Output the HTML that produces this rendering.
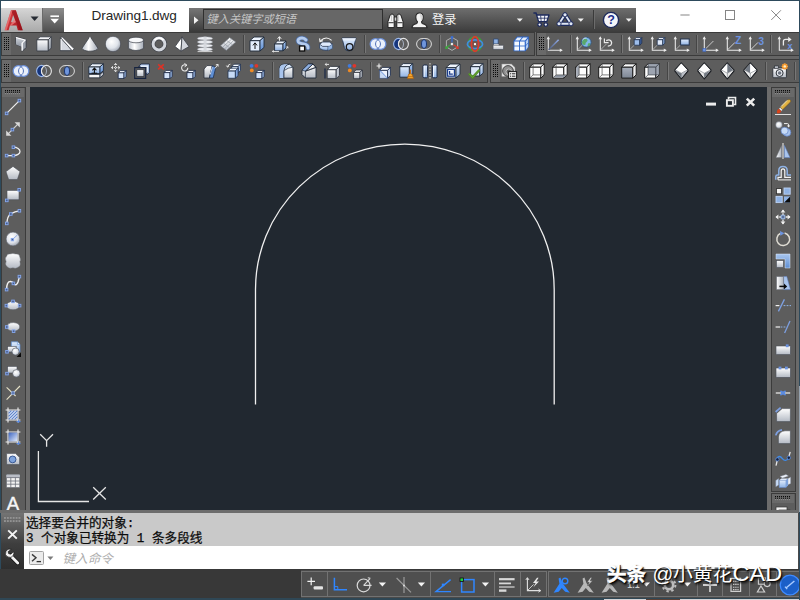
<!DOCTYPE html><html><head><meta charset="utf-8"><title>Drawing1.dwg</title><style>
html,body{margin:0;padding:0}
body{width:800px;height:600px;overflow:hidden;background:#6c6c6c;position:relative;font-family:"Liberation Sans",sans-serif}
.a{position:absolute}
.tb{position:absolute;background:#5d5d5d;border:1px solid #3b3b3b;box-sizing:border-box}
.grip{position:absolute;background:#696969}
svg{position:absolute;overflow:visible}
.sep{position:absolute;width:1px;background:#454545;box-shadow:1px 0 0 #777}
.sb{position:absolute;top:571px;height:26px;box-sizing:border-box;border:1px solid #727272;background:#4f4f4f}
</style></head><body>
<svg width="0" height="0" style="position:absolute"><defs>
<linearGradient id="gSh" x1="0" y1="0" x2="0" y2="1"><stop offset="0" stop-color="#a9b0bc"/><stop offset="1" stop-color="#7d8694"/></linearGradient>
<linearGradient id="gW" x1="0" y1="0" x2="0" y2="1"><stop offset="0" stop-color="#ffffff"/><stop offset="1" stop-color="#b4bac4"/></linearGradient>
<linearGradient id="gWh" x1="0" y1="0" x2="1" y2="0"><stop offset="0" stop-color="#ffffff"/><stop offset="1" stop-color="#aab1bc"/></linearGradient>
<linearGradient id="gD" x1="0" y1="0" x2="0" y2="1"><stop offset="0" stop-color="#c9ced6"/><stop offset="1" stop-color="#8d949f"/></linearGradient>
<linearGradient id="gB" x1="0" y1="0" x2="0" y2="1"><stop offset="0" stop-color="#e3eefc"/><stop offset="1" stop-color="#8fb2e4"/></linearGradient>
<linearGradient id="gB2" x1="0" y1="0" x2="0" y2="1"><stop offset="0" stop-color="#a9c6ee"/><stop offset="1" stop-color="#5f8fd4"/></linearGradient>
<linearGradient id="gR" x1="0" y1="0" x2="1" y2="1"><stop offset="0" stop-color="#e8474a"/><stop offset="1" stop-color="#a3141c"/></linearGradient>
<radialGradient id="gS" cx="0.4" cy="0.35" r="0.7"><stop offset="0" stop-color="#ffffff"/><stop offset="0.6" stop-color="#dfe3ea"/><stop offset="1" stop-color="#9aa1ad"/></radialGradient>
<linearGradient id="gC" x1="0" y1="0" x2="1" y2="0"><stop offset="0" stop-color="#b9bfc9"/><stop offset="0.4" stop-color="#ffffff"/><stop offset="1" stop-color="#a4abb6"/></linearGradient>
<linearGradient id="gG" x1="0" y1="0" x2="1" y2="1"><stop offset="0" stop-color="#f8d66b"/><stop offset="1" stop-color="#c98f1b"/></linearGradient>
</defs></svg>
<div class="a" style="left:0;top:0;width:800px;height:32px;background:#fff"></div>
<div class="a" style="left:0;top:0;width:800px;height:1px;background:#2d4a5c"></div>
<div class="a" style="left:1px;top:8px;width:41px;height:24px;background:linear-gradient(#d6d6d6,#a9a9a9)"></div>
<div class="a" style="left:42px;top:8px;width:22px;height:24px;background:linear-gradient(#8d8d8d,#4e4e4e);border-left:1px solid #6a6a6a;box-sizing:border-box"></div>
<div class="a" style="left:91.6px;top:7.2px;font-size:13.6px;line-height:18px;color:#262626;letter-spacing:-0.08px;white-space:nowrap">Drawing1.dwg</div>
<div class="a" style="left:189px;top:8px;width:447px;height:24px;background:linear-gradient(#6e6e6e,#3c3c3c)"></div>
<div class="a" style="left:189px;top:8px;width:14px;height:24px;background:linear-gradient(#777,#3a3a3a)"></div>
<div class="a" style="left:203px;top:9px;width:180px;height:21px;background:#676767;border:1px solid #2f2f2f;box-sizing:border-box"></div>
<svg class="a" style="left:206px;top:12.4px" width="93" height="15" viewBox="0 -11.2 93 15"><text x="0.5" y="0" font-family="'Liberation Sans','Noto Sans CJK SC',sans-serif" font-size="11.2" font-style="italic" fill="#c4c4c4">键入关键字或短语</text></svg>
<svg class="a" style="left:431.5px;top:12.1px" width="28" height="17" viewBox="0 -12.2 28 17"><text x="0" y="0" font-family="'Liberation Sans','Noto Sans CJK SC',sans-serif" font-size="12.2" fill="#f4f4f4">登录</text></svg>
<div class="a" style="left:593px;top:10px;width:1px;height:19px;background:#3a3a3a;box-shadow:1px 0 0 #6c6c6c"></div>
<svg style="left:3px;top:9px" width="24" height="22" viewBox="0 0 24 22"><g transform="translate(0.6 0) scale(0.86 1)"><path d="M1.2 21.2L8.6 1.2H14.2L22.2 21.2H16.6L15 16.6H7.4L5.8 21.2Z" fill="url(#gR)"/><path d="M11.3 5.6L8.6 13.2H14Z" fill="#b4b4b4"/><path d="M8.6 1.2H14.2L22.2 21.2H18.8Z" fill="#8f0f17" opacity=".6"/><path d="M7.4 16.6L12.8 9.4L14 13.2L9 16.6Z" fill="#ee7a7c" opacity=".8"/><path d="M1.2 21.2L8.6 1.2H10.4L3.6 21.2Z" fill="#f48a8a" opacity=".6"/></g></svg>
<svg style="left:30px;top:15.6px" width="10" height="6" viewBox="0 0 10 6"><path d="M0.6 0.5H8.6L4.6 5Z" fill="#262b33"/></svg>
<svg style="left:47px;top:14px" width="14" height="12" viewBox="0 0 14 12"><rect x="3.4" y="1.4" width="8.6" height="1.7" fill="#fff"/><path d="M3.4 4.8H12L7.7 9.4Z" fill="#fff"/></svg>
<svg style="left:192px;top:14px" width="8" height="12" viewBox="0 0 8 12"><path d="M2 2.6L6.5 6.3L2 10Z" fill="#f2f2f2"/></svg>
<svg style="left:387px;top:13px" width="17" height="16" viewBox="0 0 17 16"><path d="M1 14.6V8.6L2.8 3Q3.2 1 5 1Q6.8 1 7.2 3V14.6Z" fill="#f6f6f6" stroke="#222" stroke-width="1"/><path d="M9.8 14.6V3Q10.2 1 12 1Q13.8 1 14.2 3L16 8.6V14.6Z" fill="#f6f6f6" stroke="#222" stroke-width="1"/><rect x="7.2" y="4" width="2.6" height="4.2" fill="#cfcfcf" stroke="#222" stroke-width=".8"/><path d="M1.4 9.6H6.8M10.2 9.6H15.6" stroke="#555" stroke-width="1.2"/><path d="M4.6 2V8M11.6 2V8" stroke="#c4c4c4" stroke-width="1"/></svg>
<svg style="left:411px;top:12px" width="17" height="17" viewBox="0 0 17 17"><path d="M1 15.8Q1 12.6 5.4 11.6Q6.6 11.2 6.4 9.6Q4.8 8 4.8 5.2Q4.8 1 8.5 1Q12.2 1 12.2 5.2Q12.2 8 10.6 9.6Q10.4 11.2 11.6 11.6Q16 12.6 16 15.8Z" fill="#f4f4f4" stroke="#262626" stroke-width="1.1"/><path d="M8.5 1.6Q11.6 1.6 11.6 5.2Q11.6 7.8 10.2 9.2Q9.6 6 8.5 1.6Z" fill="#d9d9d9"/></svg>
<svg style="left:516px;top:18px" width="8" height="5" viewBox="0 0 8 5"><path d="M0.8 0.5H6.8L3.8 3.8Z" fill="#f0f0f0"/></svg>
<svg style="left:533px;top:12px" width="17" height="15" viewBox="0 0 17 15"><path d="M0.4 1H3L3.8 3.2" fill="none" stroke="#1d2a5c" stroke-width="1.5"/><path d="M3.6 3H16L13.8 9.6H5.6Z" fill="#f4f6fa" stroke="#1d2a5c" stroke-width="1.3" stroke-linejoin="round"/><path d="M4.6 6.2H14.8M7.6 3.4L8.2 9.4M11.8 3.4L11.2 9.4" stroke="#1d2a5c" stroke-width=".8"/><circle cx="6.6" cy="12.6" r="1.8" fill="#f4f6fa" stroke="#1d2a5c" stroke-width="1.3"/><circle cx="12.8" cy="12.6" r="1.8" fill="#f4f6fa" stroke="#1d2a5c" stroke-width="1.3"/></svg>
<svg style="left:556px;top:12px" width="18" height="15" viewBox="0 0 18 15"><path d="M9 2.6L3 11.8H15Z" fill="none" stroke="#1d2a5c" stroke-width="4.2" stroke-linejoin="round"/><path d="M9 2.6L3 11.8H15Z" fill="none" stroke="#dfe6f3" stroke-width="1.9" stroke-linejoin="round"/><circle cx="9" cy="2.8" r="2.1" fill="#dfe6f3" stroke="#1d2a5c" stroke-width="1"/><circle cx="3" cy="11.8" r="2.1" fill="#dfe6f3" stroke="#1d2a5c" stroke-width="1"/><circle cx="15" cy="11.8" r="2.1" fill="#dfe6f3" stroke="#1d2a5c" stroke-width="1"/></svg>
<svg style="left:577px;top:18px" width="8" height="5" viewBox="0 0 8 5"><path d="M0.8 0.5H6.8L3.8 3.8Z" fill="#f0f0f0"/></svg>
<svg style="left:602px;top:11px" width="18" height="18" viewBox="0 0 18 18"><circle cx="9" cy="9" r="7.6" fill="#f4f5f9" stroke="#1d2a5c" stroke-width="1.4"/><text x="9" y="13.4" text-anchor="middle" font-family="Liberation Sans, sans-serif" font-weight="bold" font-size="12.5" fill="#1c2f8c">?</text></svg>
<svg style="left:625px;top:18px" width="8" height="5" viewBox="0 0 8 5"><path d="M0.8 0.5H6.8L3.8 3.8Z" fill="#f0f0f0"/></svg>
<svg style="left:680px;top:9px" width="10" height="10" viewBox="0 0 10 10"><path d="M0.4 6H9.6" stroke="#858585" stroke-width="1"/></svg>
<svg style="left:725px;top:10px" width="10" height="10" viewBox="0 0 10 10"><rect x="0.5" y="0.5" width="9" height="9" fill="none" stroke="#858585" stroke-width="1"/></svg>
<svg style="left:771px;top:10px" width="10" height="10" viewBox="0 0 10 10"><path d="M0.3 0.3L9.9 9.9M9.9 0.3L0.3 9.9" stroke="#858585" stroke-width="1"/></svg>
<div class="a" style="left:0;top:32px;width:800px;height:55px;background:#656565"></div>
<div class="a" style="left:0;top:1px;width:1px;height:599px;background:#2d4a5c"></div>
<div class="tb" style="left:1px;top:32px;width:534px;height:24px"></div>
<div class="tb" style="left:536px;top:32px;width:270px;height:24px"></div>
<div class="tb" style="left:1px;top:59px;width:487px;height:24px"></div>
<div class="tb" style="left:490px;top:59px;width:320px;height:24px"></div>
<div class="grip" style="left:2px;top:33px;width:9px;height:22px"></div><svg style="left:4px;top:37px" width="6" height="16"><rect x="0" y="0" width="1" height="1.0" fill="#0a0a0a"/><rect x="2" y="0" width="1" height="1.0" fill="#0a0a0a"/><rect x="4" y="0" width="1" height="1.0" fill="#0a0a0a"/><rect x="0" y="2" width="1" height="1.0" fill="#0a0a0a"/><rect x="2" y="2" width="1" height="1.0" fill="#0a0a0a"/><rect x="4" y="2" width="1" height="1.0" fill="#0a0a0a"/><rect x="0" y="4" width="1" height="1.0" fill="#0a0a0a"/><rect x="2" y="4" width="1" height="1.0" fill="#0a0a0a"/><rect x="4" y="4" width="1" height="1.0" fill="#0a0a0a"/><rect x="0" y="6" width="1" height="1.0" fill="#0a0a0a"/><rect x="2" y="6" width="1" height="1.0" fill="#0a0a0a"/><rect x="4" y="6" width="1" height="1.0" fill="#0a0a0a"/><rect x="0" y="8" width="1" height="1.0" fill="#0a0a0a"/><rect x="2" y="8" width="1" height="1.0" fill="#0a0a0a"/><rect x="4" y="8" width="1" height="1.0" fill="#0a0a0a"/><rect x="0" y="10" width="1" height="1.0" fill="#0a0a0a"/><rect x="2" y="10" width="1" height="1.0" fill="#0a0a0a"/><rect x="4" y="10" width="1" height="1.0" fill="#0a0a0a"/><rect x="0" y="12" width="1" height="1.0" fill="#0a0a0a"/><rect x="2" y="12" width="1" height="1.0" fill="#0a0a0a"/><rect x="4" y="12" width="1" height="1.0" fill="#0a0a0a"/></svg>
<div class="grip" style="left:537px;top:33px;width:9px;height:22px"></div><svg style="left:539px;top:37px" width="6" height="16"><rect x="0" y="0" width="1" height="1.0" fill="#0a0a0a"/><rect x="2" y="0" width="1" height="1.0" fill="#0a0a0a"/><rect x="4" y="0" width="1" height="1.0" fill="#0a0a0a"/><rect x="0" y="2" width="1" height="1.0" fill="#0a0a0a"/><rect x="2" y="2" width="1" height="1.0" fill="#0a0a0a"/><rect x="4" y="2" width="1" height="1.0" fill="#0a0a0a"/><rect x="0" y="4" width="1" height="1.0" fill="#0a0a0a"/><rect x="2" y="4" width="1" height="1.0" fill="#0a0a0a"/><rect x="4" y="4" width="1" height="1.0" fill="#0a0a0a"/><rect x="0" y="6" width="1" height="1.0" fill="#0a0a0a"/><rect x="2" y="6" width="1" height="1.0" fill="#0a0a0a"/><rect x="4" y="6" width="1" height="1.0" fill="#0a0a0a"/><rect x="0" y="8" width="1" height="1.0" fill="#0a0a0a"/><rect x="2" y="8" width="1" height="1.0" fill="#0a0a0a"/><rect x="4" y="8" width="1" height="1.0" fill="#0a0a0a"/><rect x="0" y="10" width="1" height="1.0" fill="#0a0a0a"/><rect x="2" y="10" width="1" height="1.0" fill="#0a0a0a"/><rect x="4" y="10" width="1" height="1.0" fill="#0a0a0a"/><rect x="0" y="12" width="1" height="1.0" fill="#0a0a0a"/><rect x="2" y="12" width="1" height="1.0" fill="#0a0a0a"/><rect x="4" y="12" width="1" height="1.0" fill="#0a0a0a"/></svg>
<div class="grip" style="left:2px;top:60px;width:9px;height:22px"></div><svg style="left:4px;top:64px" width="6" height="16"><rect x="0" y="0" width="1" height="1.0" fill="#0a0a0a"/><rect x="2" y="0" width="1" height="1.0" fill="#0a0a0a"/><rect x="4" y="0" width="1" height="1.0" fill="#0a0a0a"/><rect x="0" y="2" width="1" height="1.0" fill="#0a0a0a"/><rect x="2" y="2" width="1" height="1.0" fill="#0a0a0a"/><rect x="4" y="2" width="1" height="1.0" fill="#0a0a0a"/><rect x="0" y="4" width="1" height="1.0" fill="#0a0a0a"/><rect x="2" y="4" width="1" height="1.0" fill="#0a0a0a"/><rect x="4" y="4" width="1" height="1.0" fill="#0a0a0a"/><rect x="0" y="6" width="1" height="1.0" fill="#0a0a0a"/><rect x="2" y="6" width="1" height="1.0" fill="#0a0a0a"/><rect x="4" y="6" width="1" height="1.0" fill="#0a0a0a"/><rect x="0" y="8" width="1" height="1.0" fill="#0a0a0a"/><rect x="2" y="8" width="1" height="1.0" fill="#0a0a0a"/><rect x="4" y="8" width="1" height="1.0" fill="#0a0a0a"/><rect x="0" y="10" width="1" height="1.0" fill="#0a0a0a"/><rect x="2" y="10" width="1" height="1.0" fill="#0a0a0a"/><rect x="4" y="10" width="1" height="1.0" fill="#0a0a0a"/><rect x="0" y="12" width="1" height="1.0" fill="#0a0a0a"/><rect x="2" y="12" width="1" height="1.0" fill="#0a0a0a"/><rect x="4" y="12" width="1" height="1.0" fill="#0a0a0a"/></svg>
<div class="grip" style="left:491px;top:60px;width:9px;height:22px"></div><svg style="left:493px;top:64px" width="6" height="16"><rect x="0" y="0" width="1" height="1.0" fill="#0a0a0a"/><rect x="2" y="0" width="1" height="1.0" fill="#0a0a0a"/><rect x="4" y="0" width="1" height="1.0" fill="#0a0a0a"/><rect x="0" y="2" width="1" height="1.0" fill="#0a0a0a"/><rect x="2" y="2" width="1" height="1.0" fill="#0a0a0a"/><rect x="4" y="2" width="1" height="1.0" fill="#0a0a0a"/><rect x="0" y="4" width="1" height="1.0" fill="#0a0a0a"/><rect x="2" y="4" width="1" height="1.0" fill="#0a0a0a"/><rect x="4" y="4" width="1" height="1.0" fill="#0a0a0a"/><rect x="0" y="6" width="1" height="1.0" fill="#0a0a0a"/><rect x="2" y="6" width="1" height="1.0" fill="#0a0a0a"/><rect x="4" y="6" width="1" height="1.0" fill="#0a0a0a"/><rect x="0" y="8" width="1" height="1.0" fill="#0a0a0a"/><rect x="2" y="8" width="1" height="1.0" fill="#0a0a0a"/><rect x="4" y="8" width="1" height="1.0" fill="#0a0a0a"/><rect x="0" y="10" width="1" height="1.0" fill="#0a0a0a"/><rect x="2" y="10" width="1" height="1.0" fill="#0a0a0a"/><rect x="4" y="10" width="1" height="1.0" fill="#0a0a0a"/><rect x="0" y="12" width="1" height="1.0" fill="#0a0a0a"/><rect x="2" y="12" width="1" height="1.0" fill="#0a0a0a"/><rect x="4" y="12" width="1" height="1.0" fill="#0a0a0a"/></svg>
<svg style="left:13px;top:36px" width="16" height="16" viewBox="0 0 16 16"><path d="M2.7 0.7L13.2 3.7V11.4L9.9 14.8H8.4V10.7L3 8.4Z" fill="#9aa0aa" stroke="#3a3e46" stroke-width="1" stroke-linejoin="round"/><path d="M3 2.2L11.2 4.6L8.4 7V10.7L3 8.4Z" fill="url(#gD)"/><path d="M2.7 0.7L13.2 3.7L9.9 7.2V14.8H8.4V7L11.2 4.6L3 2.2Z" fill="#fbfbfc"/></svg>
<svg style="left:36px;top:36px" width="16" height="16" viewBox="0 0 16 16"><path d="M0.8 3.7H12.3V15H0.8Z" fill="url(#gW)" stroke="#3a3e46" stroke-width="0.9" stroke-linejoin="round"/><path d="M0.8 3.7L4 0.8H15.3L12.3 3.7Z" fill="#f4f5f8" stroke="#3a3e46" stroke-width="0.9" stroke-linejoin="round"/><path d="M12.3 3.7L15.3 0.8V12L12.3 15Z" fill="url(#gD)" stroke="#3a3e46" stroke-width="0.9" stroke-linejoin="round"/></svg>
<svg style="left:59px;top:36px" width="16" height="16" viewBox="0 0 16 16"><path d="M1.4 1.4V14.7H13.2Z" fill="#d4d8df" stroke="#3a3e46" stroke-width=".9" stroke-linejoin="round"/><path d="M1.4 1.4L3.4 1L15.2 12.8L13.2 14.7Z" fill="#fdfdfd" stroke="#3a3e46" stroke-width=".7" stroke-linejoin="round"/><path d="M2 3V14" stroke="#ffffff" stroke-width=".9"/></svg>
<svg style="left:82px;top:36px" width="16" height="16" viewBox="0 0 16 16"><ellipse cx="8" cy="12.2" rx="7.8" ry="3" fill="url(#gC)" stroke="#3a3e46" stroke-width=".7"/><path d="M0.2 12L8 0.4L15.8 12Q8 16 0.2 12Z" fill="url(#gC)"/><path d="M0.2 12L8 0.4L15.8 12" fill="none" stroke="#3a3e46" stroke-width=".7" stroke-linejoin="round"/><path d="M8 0.8L6.4 14.6" stroke="#fff" stroke-width=".8" opacity=".8"/></svg>
<svg style="left:105px;top:36px" width="16" height="16" viewBox="0 0 16 16"><circle cx="8" cy="8" r="7.7" fill="url(#gS)" stroke="#3a3e46" stroke-width=".6"/></svg>
<svg style="left:128px;top:36px" width="16" height="16" viewBox="0 0 16 16"><path d="M0.4 4V12.4Q8 16.6 15.6 12.4V4Z" fill="url(#gC)" stroke="#3a3e46" stroke-width=".7"/><ellipse cx="8" cy="4" rx="7.6" ry="2.8" fill="#f7f8fa" stroke="#3a3e46" stroke-width=".7"/></svg>
<svg style="left:151px;top:36px" width="16" height="16" viewBox="0 0 16 16"><circle cx="8" cy="8" r="5.9" fill="none" stroke="#3a3e46" stroke-width="4.2"/><circle cx="8" cy="8" r="5.9" fill="none" stroke="#d3d7de" stroke-width="3"/><path d="M3.4 4.2A5.9 5.9 0 0 1 12.6 4.2" fill="none" stroke="#ffffff" stroke-width="1.8"/></svg>
<svg style="left:174px;top:36px" width="16" height="16" viewBox="0 0 16 16"><path d="M8 0.8L1 10.6L7 15.2Z" fill="#ffffff" stroke="#3a3e46" stroke-width=".8" stroke-linejoin="round"/><path d="M8 0.8L7 15.2L15 10.6Z" fill="#d3d6dc" stroke="#3a3e46" stroke-width=".8" stroke-linejoin="round"/></svg>
<svg style="left:197px;top:36px" width="16" height="16" viewBox="0 0 16 16"><ellipse cx="8" cy="2.4" rx="7.6" ry="1.7" fill="#eceef2" stroke="#9a9fa8" stroke-width=".4"/><ellipse cx="8" cy="6" rx="7.6" ry="1.7" fill="#eceef2" stroke="#9a9fa8" stroke-width=".4"/><ellipse cx="8" cy="9.6" rx="7.6" ry="1.7" fill="#eceef2" stroke="#9a9fa8" stroke-width=".4"/><ellipse cx="8" cy="13.2" rx="7.6" ry="1.7" fill="#eceef2" stroke="#9a9fa8" stroke-width=".4"/><rect x="6.6" y="0.8" width="3" height="14.4" fill="#d3d6dc" opacity=".85"/><path d="M0.6 15.6H15.4" stroke="#f0f0f0" stroke-width=".8"/></svg>
<svg style="left:220px;top:36px" width="16" height="16" viewBox="0 0 16 16"><path d="M0.4 9.8L9.6 1.6L15.8 6L6.4 14.6Z" fill="url(#gW)" stroke="#6a6f78" stroke-width=".6" stroke-linejoin="round"/><path d="M3.4 7.1L9.4 11.6M6.5 4.4L12.6 8.8M4.4 13L13.6 4.6M2.4 11.4L11.6 3.1" stroke="#8a909a" stroke-width=".6"/></svg>
<div class="sep" style="left:243px;top:35px;height:18px"></div>
<svg style="left:249px;top:36px" width="16" height="16" viewBox="0 0 16 16"><path d="M1 4.6H11V15H1Z" fill="#e3edfb" stroke="#1f2a3a" stroke-width="0.9" stroke-linejoin="round"/><path d="M1 4.6L5 1H15L11 4.6Z" fill="#eef4fd" stroke="#1f2a3a" stroke-width="0.9" stroke-linejoin="round"/><path d="M11 4.6L15 1V11.4L11 15Z" fill="url(#gB2)" stroke="#1f2a3a" stroke-width="0.9" stroke-linejoin="round"/><path d="M6 13V7.4M4 9.4L6 6.8L8 9.4" fill="none" stroke="#111" stroke-width="1"/></svg>
<svg style="left:272px;top:36px" width="16" height="16" viewBox="0 0 16 16"><path d="M2.6 7.8H11.0V14.8H2.6Z" fill="url(#gB)" stroke="#1f2a3a" stroke-width="0.9" stroke-linejoin="round"/><path d="M2.6 7.8L5.6 5H14.0L11.0 7.8Z" fill="#eef4fd" stroke="#1f2a3a" stroke-width="0.9" stroke-linejoin="round"/><path d="M11.0 7.8L14.0 5V12.0L11.0 14.8Z" fill="url(#gB2)" stroke="#1f2a3a" stroke-width="0.9" stroke-linejoin="round"/><path d="M7.4 4.8V1M5.6 2.8L7.4 0.6L9.2 2.8" fill="none" stroke="#f4f4f4" stroke-width="1"/><path d="M0.4 15.4H7M14 12.6L15.8 11" fill="none" stroke="#f4f4f4" stroke-width=".9"/><path d="M1.8 14.4L0.4 15.4L1.8 16.2M14.4 10.8H15.9V12.4" fill="none" stroke="#f4f4f4" stroke-width=".8"/></svg>
<svg style="left:295px;top:36px" width="16" height="16" viewBox="0 0 16 16"><path d="M11 4Q9 1.4 5.4 2.2Q2 3.4 3.4 6Q4.4 7.4 8.6 8Q13.4 8.8 13 12" fill="none" stroke="#4f6fa4" stroke-width="4.6" stroke-linecap="round"/><path d="M11 4Q9 1.4 5.4 2.2Q2 3.4 3.4 6Q4.4 7.4 8.6 8Q13.4 8.8 13 12" fill="none" stroke="#b4cbed" stroke-width="3" stroke-linecap="round"/><rect x="4.6" y="10" width="5" height="5" fill="#fafafa" stroke="#0d0d0d" stroke-width="1.3"/></svg>
<svg style="left:318px;top:36px" width="16" height="16" viewBox="0 0 16 16"><path d="M1.6 8.2V12.4Q8 16.4 14.4 12.4V8.2Z" fill="url(#gB)" stroke="#2a3a55" stroke-width=".8"/><path d="M1.6 8.2L4.6 6H11.4L14.4 8.2L11.4 10.4H4.6Z" fill="#dfeafb" stroke="#2a3a55" stroke-width=".8"/><path d="M10 10.4V14.6" stroke="#2a3a55" stroke-width=".7"/><path d="M10 10.4L14.4 8.2V12.4L10 14.6Z" fill="#7ea6dc" opacity=".6"/><path d="M2.4 5Q8 -0.6 13.6 4.4" fill="none" stroke="#f4f4f4" stroke-width="1.1"/><path d="M1.6 2.4L2 5.6L5 4.8" fill="none" stroke="#f4f4f4" stroke-width="1.1"/></svg>
<svg style="left:341px;top:36px" width="16" height="16" viewBox="0 0 16 16"><path d="M1 2H15L12.6 11.6Q12 15 8 15Q4 15 3.4 11.6Z" fill="url(#gB)" stroke="#2a3a55" stroke-width=".9"/><path d="M1 2H15L14.4 4.4H1.6Z" fill="#eef4fd" opacity=".7"/><circle cx="8.6" cy="11" r="3.3" fill="none" stroke="#1a1a1a" stroke-width="1.3"/></svg>
<div class="sep" style="left:364px;top:35px;height:18px"></div>
<svg style="left:370px;top:36px" width="16" height="16" viewBox="0 0 16 16"><circle cx="5.5" cy="8" r="5.2" fill="#e4ecfa" stroke="#6f93dc" stroke-width="1.5"/><circle cx="10.5" cy="8" r="5.2" fill="#e4ecfa" stroke="#6f93dc" stroke-width="1.5"/><circle cx="5.5" cy="8" r="4.6" fill="#e8effb"/><circle cx="10.5" cy="8" r="4.6" fill="#e8effb"/><path d="M8 3.6A5.2 5.2 0 0 1 8 12.4A5.2 5.2 0 0 1 8 3.6Z" fill="#f4f7fd" stroke="#3b5fae" stroke-width=".9"/></svg>
<svg style="left:393px;top:36px" width="16" height="16" viewBox="0 0 16 16"><ellipse cx="5.6" cy="8" rx="5" ry="5.6" fill="#16357c" stroke="#9db9ea" stroke-width="1.1"/><ellipse cx="10.4" cy="8" rx="5" ry="5.6" fill="#5d5d5d" stroke="#e6e6e6" stroke-width="1.1"/><path d="M8 3.1A5 5.6 0 0 0 8 12.9" fill="none" stroke="#e6e6e6" stroke-width="1"/><path d="M8 3.1A5 5.6 0 0 1 8 12.9" fill="none" stroke="#b9c4d8" stroke-width=".8"/></svg>
<svg style="left:416px;top:36px" width="16" height="16" viewBox="0 0 16 16"><rect x="0.6" y="2.6" width="14.8" height="10.8" rx="5.4" fill="none" stroke="#dcdcdc" stroke-width="1"/><ellipse cx="8" cy="8" rx="2.5" ry="4.3" fill="#7096dc" stroke="#1c3670" stroke-width="1"/></svg>
<div class="sep" style="left:439px;top:35px;height:18px"></div>
<svg style="left:444px;top:36px" width="16" height="16" viewBox="0 0 16 16"><path d="M8 1.4L13.6 4.6V11L8 14.4L2.4 11V4.6Z" fill="none" stroke="#b8b8b8" stroke-width=".9"/><path d="M8 8V2.2" stroke="#3a6fd8" stroke-width="1.2"/><path d="M8 8L2.8 11" stroke="#3da23d" stroke-width="1.2"/><path d="M8 8L13.2 11" stroke="#d83a2e" stroke-width="1.2"/><rect x="6.8" y="0.2" width="2.4" height="2.4" fill="#3a6fd8"/><rect x="1.2" y="10.4" width="2.6" height="2.6" fill="#3da23d"/><rect x="12.2" y="10.4" width="2.6" height="2.6" fill="#d83a2e"/><rect x="6.6" y="6.8" width="2.6" height="2.6" fill="#f0f0f0" stroke="#555" stroke-width=".5"/></svg>
<svg style="left:467px;top:36px" width="16" height="16" viewBox="0 0 16 16"><circle cx="8" cy="8" r="7.1" fill="none" stroke="#3aa33a" stroke-width="1.4"/><ellipse cx="8" cy="8.2" rx="7.6" ry="4.4" fill="none" stroke="#3f8be0" stroke-width="1.7"/><ellipse cx="8" cy="8" rx="3.6" ry="7.3" fill="none" stroke="#dc3a2e" stroke-width="1.8"/><rect x="6.6" y="6.8" width="2.8" height="2.8" fill="#fafafa" stroke="#7a2a22" stroke-width=".6"/></svg>
<svg style="left:490px;top:36px" width="16" height="16" viewBox="0 0 16 16"><path d="M3.6 3H8.2V8.2H3.6Z" fill="#8fb2e4" stroke="#2f466e" stroke-width=".8"/><path d="M3 9.2H13.6V13.6H3Z" fill="url(#gW)" stroke="#4a4f58" stroke-width=".8"/><path d="M3 9.2L4.4 8H9V9.2" fill="#f8f8f8" stroke="#4a4f58" stroke-width=".6"/></svg>
<svg style="left:513px;top:36px" width="16" height="16" viewBox="0 0 16 16"><path d="M0.6 4.8L4.2 0.6H15.8V10.8L12.4 15.2H0.6Z" fill="#2a63c8"/><rect x="1.4" y="5.5" width="4.7" height="4.1" fill="#f4f8fe"/><rect x="1.4" y="10.4" width="4.7" height="4.1" fill="#f4f8fe"/><rect x="7" y="5.5" width="4.7" height="4.1" fill="#f4f8fe"/><rect x="7" y="10.4" width="4.7" height="4.1" fill="#f4f8fe"/><path d="M2 4.4L4.4 1.5H9L6.4 4.4Z" fill="#e3edfb"/><path d="M7.6 4.4L10 1.5H14.6L12 4.4Z" fill="#e3edfb"/><path d="M12.9 5.2L15.1 2.4V6.2L12.9 9.2Z" fill="#b4cdf0"/><path d="M12.9 10.1L15.1 7.3V11.1L12.9 14.1Z" fill="#b4cdf0"/></svg>
<svg style="left:547.4px;top:36px" width="16" height="16" viewBox="0 0 16 16"><path d="M1.3 1.4V14.2H14.6" fill="none" stroke="#ececec" stroke-width="1.05"/><path d="M-0.4 3.2L1.3 0.2L3 3.2ZM12.8 12.5L15.8 14.2L12.8 15.9Z" fill="#ececec"/><defs><linearGradient id="gU" x1="0" y1="1" x2="1" y2="0"><stop offset="0" stop-color="#4a5878"/><stop offset="1" stop-color="#8fa8e4"/></linearGradient></defs><path d="M1.6 13.8L11.6 3.8" stroke="url(#gU)" stroke-width="1.6"/></svg>
<div class="sep" style="left:570px;top:35px;height:18px"></div>
<svg style="left:576px;top:36px" width="16" height="16" viewBox="0 0 16 16"><path d="M1.3 1.4V14.2H14.6" fill="none" stroke="#ececec" stroke-width="1.05"/><path d="M-0.4 3.2L1.3 0.2L3 3.2ZM12.8 12.5L15.8 14.2L12.8 15.9Z" fill="#ececec"/><path d="M1.6 13.8L7.4 8" stroke="#bdbdbd" stroke-width=".8"/><circle cx="10.2" cy="6.2" r="4.9" fill="#7fb7ea" stroke="#2c4f7c" stroke-width=".8"/><path d="M7.2 3.4Q9.4 2 11 3.2Q12.4 4.6 10.6 6Q9 6.8 9.6 8.6Q8 9.6 6.4 8Q5.4 5.4 7.2 3.4Z" fill="#5aa86b"/><path d="M12.4 7.2Q14 6.8 14.4 8.2Q13.4 10.4 11.6 10.6Q11.4 8.6 12.4 7.2Z" fill="#5aa86b"/><path d="M6.6 3.6Q8.2 1.8 10.4 1.8" stroke="#e8f4ff" stroke-width=".8" fill="none"/></svg>
<svg style="left:599px;top:36px" width="16" height="16" viewBox="0 0 16 16"><path d="M1.3 1.4V14.2H14.6" fill="none" stroke="#ececec" stroke-width="1.05"/><path d="M-0.4 3.2L1.3 0.2L3 3.2ZM12.8 12.5L15.8 14.2L12.8 15.9Z" fill="#ececec"/><path d="M1.6 13.8L7.4 8" stroke="#bdbdbd" stroke-width=".8"/><path d="M7.2 4.6Q11.8 2.6 12.6 6.4Q12.8 10 8.8 10.2" fill="none" stroke="#ececec" stroke-width="1.3"/><path d="M5.4 2.4V6.6H9.6" fill="none" stroke="#ececec" stroke-width="1.2"/></svg>
<div class="sep" style="left:621px;top:35px;height:18px"></div>
<svg style="left:628px;top:36px" width="16" height="16" viewBox="0 0 16 16"><path d="M1.3 1.4V14.2H14.6" fill="none" stroke="#ececec" stroke-width="1.05"/><path d="M-0.4 3.2L1.3 0.2L3 3.2ZM12.8 12.5L15.8 14.2L12.8 15.9Z" fill="#ececec"/><path d="M1.6 13.8L7.4 8" stroke="#bdbdbd" stroke-width=".8"/><path d="M6.2 3.616H11.8V9.216H6.2Z" fill="#9dbdea" stroke="#22324f" stroke-width=".8"/><path d="M6.2 3.616L8.216000000000001 1.6H13.816L11.8 3.616Z" fill="#e8f0fc" stroke="#22324f" stroke-width=".8" stroke-linejoin="round"/><path d="M11.8 3.616L13.816 1.6V7.199999999999999L11.8 9.216Z" fill="#3d5f9e" stroke="#22324f" stroke-width=".8" stroke-linejoin="round"/></svg>
<svg style="left:651px;top:36px" width="16" height="16" viewBox="0 0 16 16"><path d="M1.3 1.4V14.2H14.6" fill="none" stroke="#ececec" stroke-width="1.05"/><path d="M-0.4 3.2L1.3 0.2L3 3.2ZM12.8 12.5L15.8 14.2L12.8 15.9Z" fill="#ececec"/><path d="M1.6 13.8L7.4 8" stroke="#bdbdbd" stroke-width=".8"/><path d="M6.2 3.616H11.8V9.216H6.2Z" fill="#dfe9f9" stroke="#22324f" stroke-width=".8"/><path d="M6.2 3.616L8.216000000000001 1.6H13.816L11.8 3.616Z" fill="#f7faff" stroke="#22324f" stroke-width=".8" stroke-linejoin="round"/><path d="M11.8 3.616L13.816 1.6V7.199999999999999L11.8 9.216Z" fill="#8fb0e2" stroke="#22324f" stroke-width=".8" stroke-linejoin="round"/></svg>
<svg style="left:674px;top:36px" width="16" height="16" viewBox="0 0 16 16"><path d="M1.3 1.4V14.2H14.6" fill="none" stroke="#ececec" stroke-width="1.05"/><path d="M-0.4 3.2L1.3 0.2L3 3.2ZM12.8 12.5L15.8 14.2L12.8 15.9Z" fill="#ececec"/><path d="M1.6 13.8L7.4 8" stroke="#bdbdbd" stroke-width=".8"/><rect x="6.6" y="3" width="8.6" height="6" fill="url(#gB)" stroke="#22324f" stroke-width="1"/></svg>
<div class="sep" style="left:696px;top:35px;height:18px"></div>
<svg style="left:703.4px;top:36px" width="16" height="16" viewBox="0 0 16 16"><path d="M1.3 1.4V14.2H14.6" fill="none" stroke="#ececec" stroke-width="1.05"/><path d="M-0.4 3.2L1.3 0.2L3 3.2ZM12.8 12.5L15.8 14.2L12.8 15.9Z" fill="#ececec"/><path d="M1.6 13.8L10.4 5" stroke="#c9c9c9" stroke-width="1"/><rect x="-0.2" y="12.6" width="3" height="3" fill="#6c93e0" stroke="#3b5cab" stroke-width=".6"/></svg>
<svg style="left:726.4px;top:36px" width="16" height="16" viewBox="0 0 16 16"><path d="M1.3 1.4V14.2H14.6" fill="none" stroke="#ececec" stroke-width="1.05"/><path d="M-0.4 3.2L1.3 0.2L3 3.2ZM12.8 12.5L15.8 14.2L12.8 15.9Z" fill="#ececec"/><path d="M1.6 13.8L9 6.4" stroke="#d0d0d0" stroke-width="1"/><text x="9.2" y="8.4" font-family="Liberation Sans, sans-serif" font-weight="bold" font-size="10" fill="#6c93e0">Z</text></svg>
<svg style="left:749.2px;top:36px" width="16" height="16" viewBox="0 0 16 16"><path d="M1.3 1.4V14.2H14.6" fill="none" stroke="#ececec" stroke-width="1.05"/><path d="M-0.4 3.2L1.3 0.2L3 3.2ZM12.8 12.5L15.8 14.2L12.8 15.9Z" fill="#ececec"/><path d="M1.6 13.8L9 6.4" stroke="#d0d0d0" stroke-width="1"/><text x="9.6" y="8.6" font-family="Liberation Sans, sans-serif" font-weight="bold" font-size="10" fill="#6c93e0">3</text></svg>
<div class="sep" style="left:770px;top:35px;height:18px"></div>
<svg style="left:777.7px;top:36px" width="16" height="16" viewBox="0 0 16 16"><path d="M1.3 1.4V14.2H14.6" fill="none" stroke="#ececec" stroke-width="1.05"/><path d="M-0.4 3.2L1.3 0.2L3 3.2ZM12.8 12.5L15.8 14.2L12.8 15.9Z" fill="#ececec"/><path d="M5.4 9.4V5.4Q5.4 3.4 7.6 3.4H11.4" fill="none" stroke="#ececec" stroke-width="1.3"/><path d="M10.2 0.8L13.6 3.4L10.2 6Z" fill="#ececec"/><text x="9.6" y="12.6" font-family="Liberation Sans, sans-serif" font-weight="bold" font-size="9" fill="#6c93e0">x</text></svg>
<svg style="left:13px;top:63px" width="16" height="16" viewBox="0 0 16 16"><circle cx="5.5" cy="8" r="5.2" fill="#e4ecfa" stroke="#6f93dc" stroke-width="1.5"/><circle cx="10.5" cy="8" r="5.2" fill="#e4ecfa" stroke="#6f93dc" stroke-width="1.5"/><circle cx="5.5" cy="8" r="4.6" fill="#e8effb"/><circle cx="10.5" cy="8" r="4.6" fill="#e8effb"/><path d="M8 3.6A5.2 5.2 0 0 1 8 12.4A5.2 5.2 0 0 1 8 3.6Z" fill="#f4f7fd" stroke="#3b5fae" stroke-width=".9"/></svg>
<svg style="left:36px;top:63px" width="16" height="16" viewBox="0 0 16 16"><ellipse cx="5.6" cy="8" rx="5" ry="5.6" fill="#16357c" stroke="#9db9ea" stroke-width="1.1"/><ellipse cx="10.4" cy="8" rx="5" ry="5.6" fill="#5d5d5d" stroke="#e6e6e6" stroke-width="1.1"/><path d="M8 3.1A5 5.6 0 0 0 8 12.9" fill="none" stroke="#e6e6e6" stroke-width="1"/><path d="M8 3.1A5 5.6 0 0 1 8 12.9" fill="none" stroke="#b9c4d8" stroke-width=".8"/></svg>
<svg style="left:59px;top:63px" width="16" height="16" viewBox="0 0 16 16"><rect x="0.6" y="2.6" width="14.8" height="10.8" rx="5.4" fill="none" stroke="#dcdcdc" stroke-width="1"/><ellipse cx="8" cy="8" rx="2.5" ry="4.3" fill="#7096dc" stroke="#1c3670" stroke-width="1"/></svg>
<div class="sep" style="left:82px;top:62px;height:18px"></div>
<svg style="left:88px;top:63px" width="16" height="16" viewBox="0 0 16 16"><path d="M0.8 3.8H12.0V10.600000000000001H0.8Z" fill="url(#gB)" stroke="#1f2a3a" stroke-width="0.9" stroke-linejoin="round"/><path d="M0.8 3.8L4.2 0.8H15.4L12.0 3.8Z" fill="#eef4fd" stroke="#1f2a3a" stroke-width="0.9" stroke-linejoin="round"/><path d="M12.0 3.8L15.4 0.8V7.600000000000001L12.0 10.600000000000001Z" fill="url(#gB2)" stroke="#1f2a3a" stroke-width="0.9" stroke-linejoin="round"/><path d="M0.8 11.4H12V14.8H0.8Z" fill="#f6f6f6" stroke="#1f2a3a" stroke-width=".8"/><path d="M12 11.4L15.4 8.4V11.8L12 14.8Z" fill="#c4c8d0" stroke="#1f2a3a" stroke-width=".8"/><path d="M6.4 10V5.6M4.4 7.4L6.4 5L8.4 7.4" fill="none" stroke="#111" stroke-width="1.1"/><path d="M3.6 10.2H9.2" stroke="#111" stroke-width="1"/></svg>
<svg style="left:111px;top:63px" width="16" height="16" viewBox="0 0 16 16"><path d="M4.6 0.6V8.6M0.6 4.6H8.6" stroke="#e8e8e8" stroke-width="1" stroke-dasharray="1.4 .8"/><path d="M3.2 2L4.6 0.4L6 2M3.2 7.2L4.6 8.8L6 7.2M2 3.2L0.4 4.6L2 6M7.2 3.2L8.8 4.6L7.2 6" fill="none" stroke="#e8e8e8" stroke-width=".9"/><path d="M7.2 9.687999999999999H13.0V15.488H7.2Z" fill="#d3e2f8" stroke="#1c2a48" stroke-width=".8"/><path d="M7.2 9.687999999999999L9.288 7.6H15.088000000000001L13.0 9.687999999999999Z" fill="#f4f8ff" stroke="#1c2a48" stroke-width=".8" stroke-linejoin="round"/><path d="M13.0 9.687999999999999L15.088000000000001 7.6V13.399999999999999L13.0 15.488Z" fill="#9dbbe8" stroke="#1c2a48" stroke-width=".8" stroke-linejoin="round"/></svg>
<svg style="left:134px;top:63px" width="16" height="16" viewBox="0 0 16 16"><path d="M0.7 4.6H11.7V15.4H0.7Z" fill="#5d5d5d" stroke="#16233f" stroke-width="1.1"/><path d="M4.6 3.6L7 1H15.4V9.4L12.8 12V3.6Z" fill="#b9cff0" stroke="#16233f" stroke-width=".8" stroke-linejoin="round"/><path d="M6 4L7.4 2.4H14V8.6L12.6 10.2V4Z" fill="#e3edfb"/><path d="M2.7 6.6H9.9V13.6H2.7Z" fill="url(#gW)" stroke="#2a2f3a" stroke-width=".8"/></svg>
<svg style="left:157px;top:63px" width="16" height="16" viewBox="0 0 16 16"><path d="M1.2 1.4L6.8 6.4M6.8 1.4L1.2 6.4" stroke="#dc3226" stroke-width="1.7"/><path d="M7 9.56H13V15.56H7Z" fill="#d3e2f8" stroke="#1c2a48" stroke-width=".8"/><path d="M7 9.56L9.16 7.4H15.16L13 9.56Z" fill="#f4f8ff" stroke="#1c2a48" stroke-width=".8" stroke-linejoin="round"/><path d="M13 9.56L15.16 7.4V13.4L13 15.56Z" fill="#9dbbe8" stroke="#1c2a48" stroke-width=".8" stroke-linejoin="round"/></svg>
<svg style="left:180px;top:63px" width="16" height="16" viewBox="0 0 16 16"><path d="M6.2 2.2A3.1 3.1 0 1 0 7.8 4.8" fill="none" stroke="#e8e8e8" stroke-width="1.1"/><path d="M4.4 0.4L7 2.2L4.6 3.8" fill="none" stroke="#e8e8e8" stroke-width="1"/><path d="M7 9.56H13V15.56H7Z" fill="#d3e2f8" stroke="#1c2a48" stroke-width=".8"/><path d="M7 9.56L9.16 7.4H15.16L13 9.56Z" fill="#f4f8ff" stroke="#1c2a48" stroke-width=".8" stroke-linejoin="round"/><path d="M13 9.56L15.16 7.4V13.4L13 15.56Z" fill="#9dbbe8" stroke="#1c2a48" stroke-width=".8" stroke-linejoin="round"/></svg>
<svg style="left:203px;top:63px" width="16" height="16" viewBox="0 0 16 16"><path d="M1 15V6L4 2.6H9.4L6.4 15Z" fill="url(#gW)" stroke="#2a2f3a" stroke-width=".8" stroke-linejoin="round"/><path d="M6.4 15L9.4 2.6L12.8 4.4L10.2 15Z" fill="#5f8fd4" stroke="#22324f" stroke-width=".8" stroke-linejoin="round"/><path d="M7.2 11.6L9.4 4.2" stroke="#dce8fb" stroke-width=".9"/><path d="M12 5.4L15 1.4M15 1.4L12.8 1.8M15 1.4L15.2 3.6" fill="none" stroke="#f0f0f0" stroke-width=".9"/></svg>
<svg style="left:226px;top:63px" width="16" height="16" viewBox="0 0 16 16"><path d="M5.8 3.5039999999999996H12.2V9.904H5.8Z" fill="#e6effc" stroke="#22324f" stroke-width=".8"/><path d="M5.8 3.5039999999999996L8.104 1.2H14.504L12.2 3.5039999999999996Z" fill="#f8fbff" stroke="#22324f" stroke-width=".8" stroke-linejoin="round"/><path d="M12.2 3.5039999999999996L14.504 1.2V7.6000000000000005L12.2 9.904Z" fill="#9dbbe8" stroke="#22324f" stroke-width=".8" stroke-linejoin="round"/><path d="M2 7.864000000000001H9.4V15.264000000000001H2Z" fill="#c7dbf6" stroke="#22324f" stroke-width=".8"/><path d="M2 7.864000000000001L4.664 5.2H12.064L9.4 7.864000000000001Z" fill="#eef4fd" stroke="#22324f" stroke-width=".8" stroke-linejoin="round"/><path d="M9.4 7.864000000000001L12.064 5.2V12.600000000000001L9.4 15.264000000000001Z" fill="#7ea3dc" stroke="#22324f" stroke-width=".8" stroke-linejoin="round"/><path d="M4.4 1.2Q2 1.4 1.6 3.8M0.4 2.6L1.6 4.2L3 2.8" fill="none" stroke="#f0f0f0" stroke-width=".9"/></svg>
<svg style="left:249px;top:63px" width="16" height="16" viewBox="0 0 16 16"><circle cx="2.6" cy="2.8" r="1.9" fill="#3f7be0"/><circle cx="7.4" cy="2.8" r="1.9" fill="#e0362c"/><circle cx="2.8" cy="7.4" r="1.9" fill="#f08a24"/><path d="M7 9.56H13V15.56H7Z" fill="#d3e2f8" stroke="#1c2a48" stroke-width=".8"/><path d="M7 9.56L9.16 7.4H15.16L13 9.56Z" fill="#f4f8ff" stroke="#1c2a48" stroke-width=".8" stroke-linejoin="round"/><path d="M13 9.56L15.16 7.4V13.4L13 15.56Z" fill="#9dbbe8" stroke="#1c2a48" stroke-width=".8" stroke-linejoin="round"/></svg>
<div class="sep" style="left:272px;top:62px;height:18px"></div>
<svg style="left:278px;top:63px" width="16" height="16" viewBox="0 0 16 16"><path d="M1.4 15V5.6Q1.4 1.2 6.4 1.2H11.6L14.8 4.2V15Z" fill="url(#gB)" stroke="#1f2a3a" stroke-width=".9" stroke-linejoin="round"/><path d="M1.4 6Q2 1.6 6.4 1.2H11.6Q6.8 1.8 6 7.6V15H1.4Z" fill="#a9c4ec"/><path d="M6 15V7.6Q6.8 1.8 11.6 1.2" fill="none" stroke="#1f2a3a" stroke-width=".8"/><path d="M6 7.6Q10 4.6 14.8 4.2V15H6Z" fill="url(#gW)" stroke="#1f2a3a" stroke-width=".7"/></svg>
<svg style="left:301px;top:63px" width="16" height="16" viewBox="0 0 16 16"><path d="M1 7.2L7.4 1H12L15 4.4V15H4.4L1 11.6Z" fill="url(#gW)" stroke="#1f2a3a" stroke-width=".9" stroke-linejoin="round"/><path d="M1 7.2L7.4 1H12L4.4 8.2Z" fill="#8fb0e2" stroke="#1f2a3a" stroke-width=".7"/><path d="M4.4 8.2L12 1L15 4.4L4.4 8.2V15" fill="none" stroke="#1f2a3a" stroke-width=".7"/><path d="M4.4 8.2L15 4.4" stroke="#1f2a3a" stroke-width=".7"/></svg>
<svg style="left:324px;top:63px" width="16" height="16" viewBox="0 0 16 16"><path d="M3.2 6.64H12.2V15.64H3.2Z" fill="url(#gW)" stroke="#2a2f3a" stroke-width=".8"/><path d="M3.2 6.64L6.4399999999999995 3.4H15.44L12.2 6.64Z" fill="#f7f9fc" stroke="#2a2f3a" stroke-width=".8" stroke-linejoin="round"/><path d="M12.2 6.64L15.44 3.4V12.4L12.2 15.64Z" fill="#c4c9d2" stroke="#2a2f3a" stroke-width=".8" stroke-linejoin="round"/><path d="M1 5.4V15.4" stroke="#1c2a48" stroke-width="1.3"/><path d="M5 1.4H1.2M2.6 0.2L1.2 1.4L2.6 2.8" fill="none" stroke="#f0f0f0" stroke-width=".9"/></svg>
<svg style="left:347px;top:63px" width="16" height="16" viewBox="0 0 16 16"><circle cx="2.6" cy="2.8" r="1.9" fill="#3f7be0"/><circle cx="7.4" cy="2.8" r="1.9" fill="#e0362c"/><circle cx="2.8" cy="7.4" r="1.9" fill="#f08a24"/><path d="M6.6 9.304H13.0V15.704H6.6Z" fill="url(#gW)" stroke="#2a2f3a" stroke-width=".8"/><path d="M6.6 9.304L8.904 7H15.304L13.0 9.304Z" fill="#f8f9fb" stroke="#2a2f3a" stroke-width=".8" stroke-linejoin="round"/><path d="M13.0 9.304L15.304 7V13.4L13.0 15.704Z" fill="#b4bac4" stroke="#2a2f3a" stroke-width=".8" stroke-linejoin="round"/></svg>
<div class="sep" style="left:370px;top:62px;height:18px"></div>
<svg style="left:376px;top:63px" width="16" height="16" viewBox="0 0 16 16"><path d="M0.6 3H5.4M3 0.6V5.4" stroke="#f0f0f0" stroke-width="1.1"/><path d="M3.6 7.28H11.6V15.280000000000001H3.6Z" fill="#eef3fc" stroke="#1c2a48" stroke-width=".8"/><path d="M3.6 7.28L6.48 4.4H14.48L11.6 7.28Z" fill="#f8fbff" stroke="#1c2a48" stroke-width=".8" stroke-linejoin="round"/><path d="M11.6 7.28L14.48 4.4V12.4L11.6 15.280000000000001Z" fill="#c7d6ee" stroke="#1c2a48" stroke-width=".8" stroke-linejoin="round"/><path d="M3.8 7.4L11.4 15.2" stroke="#2a63c8" stroke-width=".9"/><path d="M3.6 15.2V7.4L11.6 15.2Z" fill="#b9cff0" opacity=".7"/></svg>
<svg style="left:399px;top:63px" width="16" height="16" viewBox="0 0 16 16"><path d="M0.8 3.6H10.4V14.2H0.8Z" fill="url(#gB)" stroke="#1f2a3a" stroke-width="0.9" stroke-linejoin="round"/><path d="M0.8 3.6L4.2 0.6H13.8L10.4 3.6Z" fill="#eef4fd" stroke="#1f2a3a" stroke-width="0.9" stroke-linejoin="round"/><path d="M10.4 3.6L13.8 0.6V11.2L10.4 14.2Z" fill="url(#gB2)" stroke="#1f2a3a" stroke-width="0.9" stroke-linejoin="round"/><path d="M11.4 6.6V10.4" stroke="#c8701a" stroke-width="1.4"/><path d="M8.4 15.6L9.6 11.4Q11.4 9.4 13.2 11.4L14.6 15.6Z" fill="#f6a72a" stroke="#a85c10" stroke-width=".7"/><path d="M9 13.6H14" stroke="#a85c10" stroke-width=".6"/></svg>
<svg style="left:422px;top:63px" width="16" height="16" viewBox="0 0 16 16"><rect x="1" y="2" width="4.6" height="12.8" rx="1.2" fill="url(#gB)" stroke="#1c2a48" stroke-width="1"/><path d="M2.2 3V13.8" stroke="#f4f8ff" stroke-width=".9"/><rect x="10.4" y="2" width="4.6" height="12.8" rx="1.2" fill="url(#gB)" stroke="#1c2a48" stroke-width="1"/><path d="M11.6 3V13.8" stroke="#f4f8ff" stroke-width=".9"/><path d="M8 0V16" stroke="#f0f0f0" stroke-width=".9" stroke-dasharray="1.6 1.2"/></svg>
<svg style="left:445px;top:63px" width="16" height="16" viewBox="0 0 16 16"><path d="M1 4.6H11V15H1Z" fill="#dfeafb" stroke="#1f2a3a" stroke-width="0.9" stroke-linejoin="round"/><path d="M1 4.6L5 1H15L11 4.6Z" fill="#eef4fd" stroke="#1f2a3a" stroke-width="0.9" stroke-linejoin="round"/><path d="M11 4.6L15 1V11.4L11 15Z" fill="url(#gB)" stroke="#1f2a3a" stroke-width="0.9" stroke-linejoin="round"/><rect x="2.6" y="6.4" width="6.8" height="6.8" fill="#f2f6fd" stroke="#1c3e8c" stroke-width="1.2"/><path d="M4.6 8V11.2H7.8" fill="none" stroke="#1c3e8c" stroke-width="1.2"/></svg>
<svg style="left:468px;top:63px" width="16" height="16" viewBox="0 0 16 16"><path d="M2.6 3.6H11.799999999999999V13.0H2.6Z" fill="#dbe7f8" stroke="#1f2a3a" stroke-width="0.9" stroke-linejoin="round"/><path d="M2.6 3.6L6.0 0.6H15.2L11.799999999999999 3.6Z" fill="#eef4fd" stroke="#1f2a3a" stroke-width="0.9" stroke-linejoin="round"/><path d="M11.799999999999999 3.6L15.2 0.6V10.0L11.799999999999999 13.0Z" fill="url(#gB)" stroke="#1f2a3a" stroke-width="0.9" stroke-linejoin="round"/><path d="M1 10.6L4.6 14.4L11.4 7" fill="none" stroke="#4f8a24" stroke-width="2.4"/><path d="M1 10.6L4.6 14.4L11.4 7" fill="none" stroke="#6aa838" stroke-width="1"/></svg>
<svg style="left:501px;top:63px" width="16" height="16" viewBox="0 0 16 16"><path d="M0.8 1H10.4L14 4.6V13.4H0.8Z" fill="#ececec" stroke="#8a8a8a" stroke-width=".5"/><circle cx="7" cy="8" r="5.4" fill="#8e8e8e" stroke="#3a3a3a" stroke-width=".9"/><circle cx="7.8" cy="8.8" r="2.8" fill="#5e5e5e" stroke="#cfcfcf" stroke-width=".8"/><rect x="7.6" y="8.6" width="8" height="6.8" fill="#f4f4f4" stroke="#1a1a1a" stroke-width="1"/><path d="M9 10.8H10.2M11 10.8H14.4M9 13.2H10.2M11 13.2H14.4" stroke="#222" stroke-width="1"/></svg>
<div class="sep" style="left:523px;top:62px;height:18px"></div>
<svg style="left:529px;top:63px" width="16" height="16" viewBox="0 0 16 16"><path d="M0.7 4H11.8V15.1H0.7Z" fill="#fdfdfd" fill-opacity="1" stroke="#1c1c1c" stroke-width="1" stroke-linejoin="round"/><path d="M0.7 4L4.1 0.8H15.2L11.8 4Z" fill="#fdfdfd" fill-opacity="1" stroke="#1c1c1c" stroke-width="1" stroke-linejoin="round"/><path d="M11.8 4L15.2 0.8V11.9L11.8 15.1Z" fill="#fdfdfd" fill-opacity="1" stroke="#1c1c1c" stroke-width="1" stroke-linejoin="round"/><path d="M4.1 0.8V11.9H15.2M4.1 11.9L0.7 15.1" fill="none" stroke="#4a4a4a" stroke-width=".7"/></svg>
<svg style="left:552px;top:63px" width="16" height="16" viewBox="0 0 16 16"><path d="M0.7 4H11.8V15.1H0.7Z" fill="#fdfdfd" fill-opacity="1" stroke="#1c1c1c" stroke-width="1" stroke-linejoin="round"/><path d="M0.7 4L4.1 0.8H15.2L11.8 4Z" fill="#fdfdfd" fill-opacity="1" stroke="#1c1c1c" stroke-width="1" stroke-linejoin="round"/><path d="M11.8 4L15.2 0.8V11.9L11.8 15.1Z" fill="#fdfdfd" fill-opacity="1" stroke="#1c1c1c" stroke-width="1" stroke-linejoin="round"/><path d="M1.2 14.6L4.1 11.9H14.7L11.8 14.6Z" fill="#8f97a4"/><path d="M4.1 0.8V11.9H15.2M4.1 11.9L0.7 15.1" fill="none" stroke="#4a4a4a" stroke-width=".7"/></svg>
<svg style="left:575px;top:63px" width="16" height="16" viewBox="0 0 16 16"><path d="M0.7 4H11.8V15.1H0.7Z" fill="#fdfdfd" fill-opacity="1" stroke="#1c1c1c" stroke-width="1" stroke-linejoin="round"/><path d="M0.7 4L4.1 0.8H15.2L11.8 4Z" fill="#fdfdfd" fill-opacity="1" stroke="#1c1c1c" stroke-width="1" stroke-linejoin="round"/><path d="M11.8 4L15.2 0.8V11.9L11.8 15.1Z" fill="#fdfdfd" fill-opacity="1" stroke="#1c1c1c" stroke-width="1" stroke-linejoin="round"/><path d="M1.2 4.4L4.1 1.6V11.9L1.2 14.6Z" fill="#a4abb6"/><path d="M4.1 0.8V11.9H15.2M4.1 11.9L0.7 15.1" fill="none" stroke="#4a4a4a" stroke-width=".7"/></svg>
<svg style="left:598px;top:63px" width="16" height="16" viewBox="0 0 16 16"><path d="M0.7 4H11.8V15.1H0.7Z" fill="#fdfdfd" fill-opacity="1" stroke="#1c1c1c" stroke-width="1" stroke-linejoin="round"/><path d="M0.7 4L4.1 0.8H15.2L11.8 4Z" fill="#fdfdfd" fill-opacity="1" stroke="#1c1c1c" stroke-width="1" stroke-linejoin="round"/><path d="M11.8 4L15.2 0.8V11.9L11.8 15.1Z" fill="#fdfdfd" fill-opacity="1" stroke="#1c1c1c" stroke-width="1" stroke-linejoin="round"/><path d="M4.1 0.8V11.9H15.2M4.1 11.9L0.7 15.1" fill="none" stroke="#4a4a4a" stroke-width=".7"/></svg>
<svg style="left:621px;top:63px" width="16" height="16" viewBox="0 0 16 16"><path d="M0.7 4H11.8V15.1H0.7Z" fill="url(#gSh)" fill-opacity="1" stroke="#1c1c1c" stroke-width="1" stroke-linejoin="round"/><path d="M0.7 4L4.1 0.8H15.2L11.8 4Z" fill="#fafafa" fill-opacity="1" stroke="#1c1c1c" stroke-width="1" stroke-linejoin="round"/><path d="M11.8 4L15.2 0.8V11.9L11.8 15.1Z" fill="#eeeeee" fill-opacity="1" stroke="#1c1c1c" stroke-width="1" stroke-linejoin="round"/></svg>
<svg style="left:644px;top:63px" width="16" height="16" viewBox="0 0 16 16"><path d="M0.7 4H11.8V15.1H0.7Z" fill="#fdfdfd" fill-opacity="1" stroke="#1c1c1c" stroke-width="1" stroke-linejoin="round"/><path d="M0.7 4L4.1 0.8H15.2L11.8 4Z" fill="#fdfdfd" fill-opacity="1" stroke="#1c1c1c" stroke-width="1" stroke-linejoin="round"/><path d="M11.8 4L15.2 0.8V11.9L11.8 15.1Z" fill="#fdfdfd" fill-opacity="1" stroke="#1c1c1c" stroke-width="1" stroke-linejoin="round"/><path d="M4.1 0.8H15.2V11.9H4.1Z" fill="#8d95a3" opacity=".85"/><path d="M4.1 0.8V11.9H15.2M4.1 11.9L0.7 15.1M0.7 4H11.8V15.1M11.8 4L15.2 0.8" fill="none" stroke="#3a3f48" stroke-width=".7"/></svg>
<div class="sep" style="left:667px;top:62px;height:18px"></div>
<svg style="left:673px;top:63px" width="16" height="16" viewBox="0 0 16 16"><path d="M8.3 -0.2L14.9 6.8V8L8.3 15.9L1.9 8V6.8Z" fill="#fff" stroke="#1e2126" stroke-width="1.2" stroke-linejoin="round"/><path d="M8.3 0.6L2.7 6.9L8.3 10.1Z" fill="#ffffff"/><path d="M8.3 0.6L14.1 6.9L8.3 10.1Z" fill="#ffffff"/><path d="M2.5 7.4L8.3 10.4V15Z" fill="#6f767f"/><path d="M14.3 7.4L8.3 10.4V15Z" fill="#b9bec6"/><path d="M2.6 7.1L8.3 10.2L14.2 7.1M8.3 10.2V15" fill="none" stroke="#555a62" stroke-width=".5"/></svg>
<svg style="left:696px;top:63px" width="16" height="16" viewBox="0 0 16 16"><path d="M8.3 -0.2L14.9 6.8V8L8.3 15.9L1.9 8V6.8Z" fill="#fff" stroke="#1e2126" stroke-width="1.2" stroke-linejoin="round"/><path d="M8.3 0.6L2.7 6.9L8.3 10.1Z" fill="#ffffff"/><path d="M8.3 0.6L14.1 6.9L8.3 10.1Z" fill="#ffffff"/><path d="M2.5 7.4L8.3 10.4V15Z" fill="#ececec"/><path d="M14.3 7.4L8.3 10.4V15Z" fill="#737a84"/><path d="M2.6 7.1L8.3 10.2L14.2 7.1M8.3 10.2V15" fill="none" stroke="#555a62" stroke-width=".5"/></svg>
<svg style="left:719px;top:63px" width="16" height="16" viewBox="0 0 16 16"><path d="M8.3 -0.2L14.9 6.8V8L8.3 15.9L1.9 8V6.8Z" fill="#fff" stroke="#1e2126" stroke-width="1.2" stroke-linejoin="round"/><path d="M8.3 0.6L2.7 6.9L8.3 10.1Z" fill="#ffffff"/><path d="M8.3 0.6L14.1 6.9L8.3 10.1Z" fill="#727983"/><path d="M2.5 7.4L8.3 10.4V15Z" fill="#f4f4f4"/><path d="M14.3 7.4L8.3 10.4V15Z" fill="#e4e4e4"/><path d="M2.6 7.1L8.3 10.2L14.2 7.1M8.3 10.2V15" fill="none" stroke="#555a62" stroke-width=".5"/></svg>
<svg style="left:742px;top:63px" width="16" height="16" viewBox="0 0 16 16"><path d="M8.3 -0.2L14.9 6.8V8L8.3 15.9L1.9 8V6.8Z" fill="#fff" stroke="#1e2126" stroke-width="1.2" stroke-linejoin="round"/><path d="M8.3 0.6L2.7 6.9L8.3 10.1Z" fill="#727983"/><path d="M8.3 0.6L14.1 6.9L8.3 10.1Z" fill="#ffffff"/><path d="M2.5 7.4L8.3 10.4V15Z" fill="#ececec"/><path d="M14.3 7.4L8.3 10.4V15Z" fill="#f8f8f8"/><path d="M2.6 7.1L8.3 10.2L14.2 7.1M8.3 10.2V15" fill="none" stroke="#555a62" stroke-width=".5"/></svg>
<div class="sep" style="left:765px;top:62px;height:18px"></div>
<svg style="left:772px;top:63px" width="16" height="16" viewBox="0 0 16 16"><rect x="0.8" y="5" width="13.6" height="9.8" rx="1" fill="url(#gW)" stroke="#2a2f36" stroke-width=".9"/><rect x="2.4" y="3" width="4" height="2.2" fill="#cfd3da" stroke="#2a2f36" stroke-width=".7"/><circle cx="7.6" cy="10" r="3.5" fill="#e9ecf1" stroke="#2a2f36" stroke-width="1"/><circle cx="7.6" cy="10" r="1.8" fill="#6d7480"/><circle cx="12.8" cy="3.4" r="2.9" fill="#f08a24"/><path d="M12.8 0.2V6.6M9.6 3.4H16M10.6 1.2L15 5.6M15 1.2L10.6 5.6" stroke="#f7b24c" stroke-width=".8"/><circle cx="12.8" cy="3.4" r="1.2" fill="#fff0c8"/></svg>
<div class="sep" style="left:794px;top:62px;height:18px"></div>
<div class="tb" style="left:1px;top:87px;width:25px;height:426px"></div>
<div class="grip" style="left:2px;top:88px;width:22px;height:9px"></div><svg style="left:5.2px;top:90.2px" width="16" height="6"><rect x="0" y="0" width="1.05" height="1.05" fill="#0a0a0a"/><rect x="0" y="1.7" width="1.05" height="1.05" fill="#0a0a0a"/><rect x="0" y="3.3" width="1.05" height="0.8" fill="#9a9a9a"/><rect x="2" y="0" width="1.05" height="1.05" fill="#0a0a0a"/><rect x="2" y="1.7" width="1.05" height="1.05" fill="#0a0a0a"/><rect x="2" y="3.3" width="1.05" height="0.8" fill="#9a9a9a"/><rect x="4" y="0" width="1.05" height="1.05" fill="#0a0a0a"/><rect x="4" y="1.7" width="1.05" height="1.05" fill="#0a0a0a"/><rect x="4" y="3.3" width="1.05" height="0.8" fill="#9a9a9a"/><rect x="6" y="0" width="1.05" height="1.05" fill="#0a0a0a"/><rect x="6" y="1.7" width="1.05" height="1.05" fill="#0a0a0a"/><rect x="6" y="3.3" width="1.05" height="0.8" fill="#9a9a9a"/><rect x="8" y="0" width="1.05" height="1.05" fill="#0a0a0a"/><rect x="8" y="1.7" width="1.05" height="1.05" fill="#0a0a0a"/><rect x="8" y="3.3" width="1.05" height="0.8" fill="#9a9a9a"/><rect x="10" y="0" width="1.05" height="1.05" fill="#0a0a0a"/><rect x="10" y="1.7" width="1.05" height="1.05" fill="#0a0a0a"/><rect x="10" y="3.3" width="1.05" height="0.8" fill="#9a9a9a"/><rect x="12" y="0" width="1.05" height="1.05" fill="#0a0a0a"/><rect x="12" y="1.7" width="1.05" height="1.05" fill="#0a0a0a"/><rect x="12" y="3.3" width="1.05" height="0.8" fill="#9a9a9a"/><rect x="14" y="0" width="1.05" height="1.05" fill="#0a0a0a"/><rect x="14" y="1.7" width="1.05" height="1.05" fill="#0a0a0a"/><rect x="14" y="3.3" width="1.05" height="0.8" fill="#9a9a9a"/></svg>
<div class="tb" style="left:771px;top:87px;width:25px;height:405px"></div>
<div class="grip" style="left:772px;top:88px;width:22px;height:9px"></div><svg style="left:775.2px;top:90.2px" width="16" height="6"><rect x="0" y="0" width="1.05" height="1.05" fill="#0a0a0a"/><rect x="0" y="1.7" width="1.05" height="1.05" fill="#0a0a0a"/><rect x="0" y="3.3" width="1.05" height="0.8" fill="#9a9a9a"/><rect x="2" y="0" width="1.05" height="1.05" fill="#0a0a0a"/><rect x="2" y="1.7" width="1.05" height="1.05" fill="#0a0a0a"/><rect x="2" y="3.3" width="1.05" height="0.8" fill="#9a9a9a"/><rect x="4" y="0" width="1.05" height="1.05" fill="#0a0a0a"/><rect x="4" y="1.7" width="1.05" height="1.05" fill="#0a0a0a"/><rect x="4" y="3.3" width="1.05" height="0.8" fill="#9a9a9a"/><rect x="6" y="0" width="1.05" height="1.05" fill="#0a0a0a"/><rect x="6" y="1.7" width="1.05" height="1.05" fill="#0a0a0a"/><rect x="6" y="3.3" width="1.05" height="0.8" fill="#9a9a9a"/><rect x="8" y="0" width="1.05" height="1.05" fill="#0a0a0a"/><rect x="8" y="1.7" width="1.05" height="1.05" fill="#0a0a0a"/><rect x="8" y="3.3" width="1.05" height="0.8" fill="#9a9a9a"/><rect x="10" y="0" width="1.05" height="1.05" fill="#0a0a0a"/><rect x="10" y="1.7" width="1.05" height="1.05" fill="#0a0a0a"/><rect x="10" y="3.3" width="1.05" height="0.8" fill="#9a9a9a"/><rect x="12" y="0" width="1.05" height="1.05" fill="#0a0a0a"/><rect x="12" y="1.7" width="1.05" height="1.05" fill="#0a0a0a"/><rect x="12" y="3.3" width="1.05" height="0.8" fill="#9a9a9a"/><rect x="14" y="0" width="1.05" height="1.05" fill="#0a0a0a"/><rect x="14" y="1.7" width="1.05" height="1.05" fill="#0a0a0a"/><rect x="14" y="3.3" width="1.05" height="0.8" fill="#9a9a9a"/></svg>
<div class="tb" style="left:771px;top:493px;width:25px;height:30px"></div>
<div class="grip" style="left:772px;top:494px;width:22px;height:9px"></div><svg style="left:775.2px;top:496.2px" width="16" height="6"><rect x="0" y="0" width="1.05" height="1.05" fill="#0a0a0a"/><rect x="0" y="1.7" width="1.05" height="1.05" fill="#0a0a0a"/><rect x="0" y="3.3" width="1.05" height="0.8" fill="#9a9a9a"/><rect x="2" y="0" width="1.05" height="1.05" fill="#0a0a0a"/><rect x="2" y="1.7" width="1.05" height="1.05" fill="#0a0a0a"/><rect x="2" y="3.3" width="1.05" height="0.8" fill="#9a9a9a"/><rect x="4" y="0" width="1.05" height="1.05" fill="#0a0a0a"/><rect x="4" y="1.7" width="1.05" height="1.05" fill="#0a0a0a"/><rect x="4" y="3.3" width="1.05" height="0.8" fill="#9a9a9a"/><rect x="6" y="0" width="1.05" height="1.05" fill="#0a0a0a"/><rect x="6" y="1.7" width="1.05" height="1.05" fill="#0a0a0a"/><rect x="6" y="3.3" width="1.05" height="0.8" fill="#9a9a9a"/><rect x="8" y="0" width="1.05" height="1.05" fill="#0a0a0a"/><rect x="8" y="1.7" width="1.05" height="1.05" fill="#0a0a0a"/><rect x="8" y="3.3" width="1.05" height="0.8" fill="#9a9a9a"/><rect x="10" y="0" width="1.05" height="1.05" fill="#0a0a0a"/><rect x="10" y="1.7" width="1.05" height="1.05" fill="#0a0a0a"/><rect x="10" y="3.3" width="1.05" height="0.8" fill="#9a9a9a"/><rect x="12" y="0" width="1.05" height="1.05" fill="#0a0a0a"/><rect x="12" y="1.7" width="1.05" height="1.05" fill="#0a0a0a"/><rect x="12" y="3.3" width="1.05" height="0.8" fill="#9a9a9a"/><rect x="14" y="0" width="1.05" height="1.05" fill="#0a0a0a"/><rect x="14" y="1.7" width="1.05" height="1.05" fill="#0a0a0a"/><rect x="14" y="3.3" width="1.05" height="0.8" fill="#9a9a9a"/></svg>
<div class="a" style="left:796px;top:87px;width:4px;height:426px;background:#6a6a6a"></div>
<svg style="left:5px;top:99px" width="16" height="16" viewBox="0 0 16 16"><path d="M1.6 14.4L14.4 1.6" stroke="#eeeeee" stroke-width="1.2"/><rect x="0.3" y="13.1" width="2.6" height="2.6" fill="#4a5f8c" stroke="#86a8ee" stroke-width=".9"/><rect x="13.1" y="0.3" width="2.6" height="2.6" fill="#4a5f8c" stroke="#86a8ee" stroke-width=".9"/></svg>
<svg style="left:5px;top:121px" width="16" height="16" viewBox="0 0 16 16"><path d="M2.4 13.6L13.6 2.4" stroke="#d4d4d4" stroke-width="1.2"/><path d="M9.6 1.2H14.8V6.4Z" fill="#d9d9d9"/><path d="M1.2 9.6V14.8H6.4Z" fill="#d9d9d9"/><rect x="6.1" y="7.3" width="2.6" height="2.6" fill="#4a5f8c" stroke="#86a8ee" stroke-width=".9"/></svg>
<svg style="left:5px;top:143px" width="16" height="16" viewBox="0 0 16 16"><path d="M1.4 12.6H8.4A6.6 4.2 0 0 0 8.4 4.2" fill="none" stroke="#eeeeee" stroke-width="1.3"/><rect x="0.3" y="11.3" width="2.6" height="2.6" fill="#4a5f8c" stroke="#86a8ee" stroke-width=".9"/><rect x="7.1" y="11.3" width="2.6" height="2.6" fill="#4a5f8c" stroke="#86a8ee" stroke-width=".9"/><rect x="7.1" y="2.9" width="2.6" height="2.6" fill="#4a5f8c" stroke="#86a8ee" stroke-width=".9"/></svg>
<svg style="left:5px;top:165px" width="16" height="16" viewBox="0 0 16 16"><path d="M8 1.4L15 6.6L12.4 14.6H3.6L1 6.6Z" fill="url(#gW)" stroke="#4a4f58" stroke-width=".6"/></svg>
<svg style="left:5px;top:187px" width="16" height="16" viewBox="0 0 16 16"><rect x="2" y="3.4" width="12" height="9.4" fill="url(#gW)" stroke="#4a4f58" stroke-width=".6"/><rect x="12.9" y="1.5" width="2.6" height="2.6" fill="#4a5f8c" stroke="#86a8ee" stroke-width=".9"/><rect x="0.5" y="12.1" width="2.6" height="2.6" fill="#4a5f8c" stroke="#86a8ee" stroke-width=".9"/></svg>
<svg style="left:5px;top:209px" width="16" height="16" viewBox="0 0 16 16"><path d="M1.8 14.6Q2.4 6.6 6 4.6Q10 2.4 14.4 1.8" fill="none" stroke="#eeeeee" stroke-width="1.3"/><rect x="0.5" y="13.1" width="2.6" height="2.6" fill="#4a5f8c" stroke="#86a8ee" stroke-width=".9"/><rect x="4.5" y="3.7" width="2.6" height="2.6" fill="#4a5f8c" stroke="#86a8ee" stroke-width=".9"/><rect x="13.1" y="0.5" width="2.6" height="2.6" fill="#4a5f8c" stroke="#86a8ee" stroke-width=".9"/></svg>
<svg style="left:5px;top:231px" width="16" height="16" viewBox="0 0 16 16"><circle cx="8" cy="8" r="6.9" fill="url(#gS)" stroke="#5a5f68" stroke-width=".6"/><path d="M7.4 8.6L12.4 4" stroke="#7f9fe0" stroke-width=".9"/><rect x="6.2" y="7.4" width="2.4" height="2.4" fill="#4a5f8c" stroke="#86a8ee" stroke-width=".9"/></svg>
<svg style="left:5px;top:253px" width="16" height="16" viewBox="0 0 16 16"><path d="M1.8 3Q2 0.6 5 1Q8 0 10.6 1Q14.4 0.4 14.6 3.6Q16.2 7.4 14.8 8.6Q16.2 13.4 13 14.2Q10.4 16 8 14.8Q4 16 2.2 13.8Q-0.4 11.8 1.2 8.6Q-0.6 5 1.8 3Z" fill="url(#gW)" stroke="#7a7f88" stroke-width=".4"/></svg>
<svg style="left:5px;top:275px" width="16" height="16" viewBox="0 0 16 16"><path d="M1.6 14.6Q1.6 6.4 5.6 6.6Q8 6.8 9 9Q11.4 11.4 13 7Q14 3.6 14.4 1.6" fill="none" stroke="#eeeeee" stroke-width="1.5"/><rect x="0.3" y="13.3" width="2.6" height="2.6" fill="#4a5f8c" stroke="#86a8ee" stroke-width=".9"/><rect x="7.1" y="7.1" width="2.6" height="2.6" fill="#4a5f8c" stroke="#86a8ee" stroke-width=".9"/><rect x="13.1" y="0.3" width="2.6" height="2.6" fill="#4a5f8c" stroke="#86a8ee" stroke-width=".9"/></svg>
<svg style="left:5px;top:297px" width="16" height="16" viewBox="0 0 16 16"><ellipse cx="8" cy="8.6" rx="6.6" ry="4.2" fill="url(#gW)" stroke="#5a5f68" stroke-width=".6"/><rect x="0.1" y="7.3" width="2.6" height="2.6" fill="#4a5f8c" stroke="#86a8ee" stroke-width=".9"/><rect x="6.7" y="3.1" width="2.6" height="2.6" fill="#4a5f8c" stroke="#86a8ee" stroke-width=".9"/><rect x="13.3" y="7.3" width="2.6" height="2.6" fill="#4a5f8c" stroke="#86a8ee" stroke-width=".9"/></svg>
<svg style="left:5px;top:319px" width="16" height="16" viewBox="0 0 16 16"><path d="M2 8Q2.4 3.4 8.6 3.6Q14.6 4 14.8 8Q14.4 11.6 9 12.2Q8.6 12.6 8.4 12Q2 11.8 2 8Z" fill="url(#gW)" stroke="#5a5f68" stroke-width=".6"/><rect x="0.5" y="6.7" width="2.6" height="2.6" fill="#4a5f8c" stroke="#86a8ee" stroke-width=".9"/><rect x="7.3" y="10.9" width="2.6" height="2.6" fill="#4a5f8c" stroke="#86a8ee" stroke-width=".9"/></svg>
<svg style="left:5px;top:341px" width="16" height="16" viewBox="0 0 16 16"><path d="M6.4 0.8H12.4L15 3.4V11H6.4Z" fill="url(#gB)" stroke="#5f8fd4" stroke-width=".7"/><path d="M12.4 0.8V3.4H15" fill="#eef4fd" stroke="#5f8fd4" stroke-width=".6"/><rect x="2.6" y="5.4" width="8.6" height="5.6" fill="url(#gW)" stroke="#4a4f58" stroke-width=".6"/><circle cx="10.6" cy="10.6" r="3.6" fill="url(#gS)" stroke="#4a4f58" stroke-width=".6"/><path d="M16 11.6V16H11.6Z" fill="#0a0a0a"/><rect x="0.7" y="9.5" width="2.6" height="2.6" fill="#4a5f8c" stroke="#86a8ee" stroke-width=".9"/></svg>
<svg style="left:5px;top:363px" width="16" height="16" viewBox="0 0 16 16"><rect x="2.6" y="3.4" width="9.4" height="6.6" fill="url(#gW)" stroke="#4a4f58" stroke-width=".6"/><circle cx="11.4" cy="10.4" r="3.8" fill="url(#gS)" stroke="#4a4f58" stroke-width=".6"/><rect x="0.7" y="9.3" width="2.6" height="2.6" fill="#4a5f8c" stroke="#86a8ee" stroke-width=".9"/></svg>
<svg style="left:5px;top:385px" width="16" height="16" viewBox="0 0 16 16"><path d="M1.6 14.6L15 1M1.6 2.4L10.6 11" stroke="#e6e2c8" stroke-width="1.1"/><rect x="6.8" y="6.8" width="2.4" height="2.4" fill="#4a5f8c" stroke="#86a8ee" stroke-width=".9"/></svg>
<svg style="left:5px;top:407px" width="16" height="16" viewBox="0 0 16 16"><path d="M3 0.6V15.4M13 0.6V15.4M0.6 3H15.4M0.6 13H15.4" stroke="#f0f0f0" stroke-width="1.1"/><rect x="3.6" y="3.6" width="8.8" height="8.8" fill="#dbe7fa"/><path d="M3.6 6.4L6.4 3.6M3.6 9.4L9.4 3.6M3.6 12.4L12.4 3.6M6.6 12.4L12.4 6.6M9.6 12.4L12.4 9.6" stroke="#5f83c8" stroke-width="1.1"/><path d="M11.4 14.6H15.6M13.6 12.4V16" stroke="#5b8be0" stroke-width="1"/></svg>
<svg style="left:5px;top:429px" width="16" height="16" viewBox="0 0 16 16"><defs><linearGradient id="gHg" x1="0" y1="0" x2="1" y2="1"><stop offset="0" stop-color="#3f66c0"/><stop offset="1" stop-color="#e3ecfb"/></linearGradient></defs><path d="M3 0.6V15.4M13 0.6V15.4M0.6 3H15.4M0.6 13H15.4" stroke="#f0f0f0" stroke-width="1.1"/><rect x="3.6" y="3.6" width="8.8" height="8.8" fill="url(#gHg)"/><path d="M11.4 14.6H15.6M13.6 12.4V16" stroke="#5b8be0" stroke-width="1"/></svg>
<svg style="left:5px;top:451px" width="16" height="16" viewBox="0 0 16 16"><path d="M1.6 2.6H10.6L14.6 6.4V13.6H1.6Z" fill="url(#gW)" stroke="#4a4f58" stroke-width=".6"/><circle cx="7.6" cy="8.4" r="3.4" fill="#7ea3dc" stroke="#2f4f8c" stroke-width=".9"/></svg>
<svg style="left:5px;top:473px" width="16" height="16" viewBox="0 0 16 16"><rect x="1.4" y="1.6" width="13.4" height="13" fill="#f2f2f2" stroke="#4a4f58" stroke-width=".5"/><rect x="1.4" y="1.6" width="13.4" height="3" fill="#b9bdc6"/><path d="M1.4 4.6H14.8M1.4 8H14.8M1.4 11.2H14.8M5.8 4.6V14.6M10.4 4.6V14.6" stroke="#6a6f78" stroke-width=".8"/></svg>
<svg style="left:5px;top:495px" width="16" height="16" viewBox="0 0 16 16"><text x="8" y="15.2" text-anchor="middle" font-family="Liberation Sans, sans-serif" font-size="18.6" fill="#f6f6f6" stroke="#f6f6f6" stroke-width=".45">A</text></svg>
<svg style="left:775px;top:99px" width="16" height="16" viewBox="0 0 16 16"><path d="M5.2 8.4L12.8 0.8Q14.8 0 15.6 1.4Q16 2.6 15 3.6L7.6 10.8Z" fill="url(#gG)" stroke="#6b4a10" stroke-width=".5"/><path d="M12.2 1.4L6 7.6" stroke="#fff4c8" stroke-width="1"/><path d="M5.2 8.4L7.6 10.8L6.4 12.2L3.8 9.8Z" fill="#ececec" stroke="#555" stroke-width=".4"/><path d="M3.8 9.8L6.4 12.2Q5.4 14.8 2.2 14.4Q1 11.8 3.8 9.8Z" fill="#d8431a"/><path d="M0 15.5H16" stroke="#f0f0f0" stroke-width=".9"/></svg>
<svg style="left:775px;top:121px" width="16" height="16" viewBox="0 0 16 16"><circle cx="4" cy="4" r="3.4" fill="url(#gS)" stroke="#5a5f68" stroke-width=".5"/><circle cx="12" cy="11.4" r="3.8" fill="#a9c4ec" stroke="#5f83c8" stroke-width=".7"/><circle cx="9.6" cy="9.8" r="3.6" fill="#c7dbf6" stroke="#5f83c8" stroke-width=".7"/><path d="M9 2.6H12.4Q13.6 2.6 13.6 3.8V5.2" fill="none" stroke="#f0f0f0" stroke-width="1"/><path d="M12 4.6L13.6 6.6L15.2 4.6Z" fill="#f0f0f0"/></svg>
<svg style="left:775px;top:143px" width="16" height="16" viewBox="0 0 16 16"><path d="M6.6 2.4V14.6H1Z" fill="url(#gWh)" stroke="#6a6f78" stroke-width=".4"/><path d="M9.4 2.4V14.6H15Z" fill="#a9c4ec" stroke="#5f83c8" stroke-width=".5"/><path d="M8 0V16" stroke="#f4f4f4" stroke-width="1"/></svg>
<svg style="left:775px;top:165px" width="16" height="16" viewBox="0 0 16 16"><path d="M0.8 14.8V11.6Q0.8 10 2.4 10H3.8V5.6Q3.8 1.4 8 1.4Q12.2 1.4 12.2 5.6V10H16" fill="none" stroke="#8fb2e4" stroke-width="1.5" stroke-linejoin="round"/><path d="M3 14.8V12.4H6.2V6Q6.2 3.8 8 3.8Q9.8 3.8 9.8 6V12.4H16" fill="none" stroke="#f4f4f4" stroke-width="1.2"/><path d="M3 14.9H16" stroke="#f4f4f4" stroke-width="1"/></svg>
<svg style="left:775px;top:187px" width="16" height="16" viewBox="0 0 16 16"><rect x="1.4" y="1.6" width="5.2" height="5.2" fill="#f6f6f6" stroke="#2a2a2a" stroke-width=".8"/><rect x="9" y="1" width="6.2" height="6.2" fill="#8fb2e4" stroke="#bcd2f2" stroke-width=".9"/><rect x="1" y="9.4" width="6.2" height="6.2" fill="#8fb2e4" stroke="#bcd2f2" stroke-width=".9"/><path d="M9 9.4H15.2V15.6H9Z" fill="#8fb2e4"/><path d="M15.2 9.6V15.6H9.2Z" fill="#0a0a0a"/></svg>
<svg style="left:775px;top:209px" width="16" height="16" viewBox="0 0 16 16"><path d="M8 1V15M1 8H15" stroke="#f0f0f0" stroke-width="1.3" stroke-dasharray="2.2 1"/><path d="M5.6 3.4L8 0.4L10.4 3.4ZM5.6 12.6L8 15.6L10.4 12.6ZM3.4 5.6L0.4 8L3.4 10.4ZM12.6 5.6L15.6 8L12.6 10.4Z" fill="#f0f0f0"/><rect x="6.2" y="6.2" width="3.6" height="3.6" fill="#59709c" stroke="#9dbbe8" stroke-width=".9"/></svg>
<svg style="left:775px;top:231px" width="16" height="16" viewBox="0 0 16 16"><path d="M9.6 1.9A6.4 6.4 0 1 1 5.6 2.3" fill="none" stroke="#e0ddd4" stroke-width="1.5"/><path d="M5 0L9.4 2.2L5.4 4.8Z" fill="#6c93e0"/></svg>
<svg style="left:775px;top:253px" width="16" height="16" viewBox="0 0 16 16"><path d="M1 1H15V15H10V6H1Z" fill="url(#gB2)" stroke="#dfe9f9" stroke-width=".5"/><rect x="1.4" y="7.6" width="7" height="7" fill="url(#gW)" stroke="#4a4f58" stroke-width=".6"/></svg>
<svg style="left:775px;top:275px" width="16" height="16" viewBox="0 0 16 16"><path d="M8.6 1.6H11.8L15.4 14.6H8.6Z" fill="#a9c4ec" stroke="#5f83c8" stroke-width=".5"/><rect x="1.6" y="1.6" width="7" height="13" fill="url(#gWh)" stroke="#6a6f78" stroke-width=".5"/><path d="M4.4 11.4H9.8" stroke="#0a0a0a" stroke-width="1.5"/><path d="M9 8.6L12.2 11.4L9 14.2Z" fill="#0a0a0a"/></svg>
<svg style="left:775px;top:297px" width="16" height="16" viewBox="0 0 16 16"><path d="M0.6 8.6H4.4" stroke="#f0f0f0" stroke-width="1.2"/><path d="M8.6 8.6H16" stroke="#8fb2e4" stroke-width="1" stroke-dasharray="1.8 1.2"/><path d="M9.4 2.4L3.4 14.4" stroke="#7d9fe0" stroke-width="1.3"/></svg>
<svg style="left:775px;top:319px" width="16" height="16" viewBox="0 0 16 16"><path d="M0.6 8H5" stroke="#f0f0f0" stroke-width="1.2"/><path d="M5.6 8H10.4" stroke="#8fb2e4" stroke-width="1" stroke-dasharray="1.8 1.2"/><path d="M15 2L9.6 14" stroke="#7d9fe0" stroke-width="1.3"/></svg>
<svg style="left:775px;top:341px" width="16" height="16" viewBox="0 0 16 16"><rect x="1" y="5" width="14.4" height="8.6" fill="url(#gW)" stroke="#4a4f58" stroke-width=".6"/><rect x="10.8" y="3.4" width="2.8" height="2.8" fill="#6c93e0"/></svg>
<svg style="left:775px;top:363px" width="16" height="16" viewBox="0 0 16 16"><rect x="1" y="5" width="14.4" height="9.4" fill="url(#gW)" stroke="#4a4f58" stroke-width=".6"/><rect x="3.6" y="3.6" width="2.8" height="2.8" fill="#6c93e0"/><rect x="10" y="3.6" width="2.8" height="2.8" fill="#6c93e0"/></svg>
<svg style="left:775px;top:385px" width="16" height="16" viewBox="0 0 16 16"><path d="M0.8 8H15.2" stroke="#f0f0f0" stroke-width="1.2"/><path d="M5.4 5.8L10.6 10.2M10.6 5.8L5.4 10.2" stroke="#5b8be0" stroke-width="1.6"/><path d="M6 6.4H10V9.6H6Z" fill="#5b8be0"/></svg>
<svg style="left:775px;top:407px" width="16" height="16" viewBox="0 0 16 16"><path d="M1.6 14.6V6.4L7.2 1.6H15.4V14.6Z" fill="url(#gW)" stroke="#4a4f58" stroke-width=".6"/><path d="M0.6 5L5.6 0.6" stroke="#7d9fe0" stroke-width="1.7"/></svg>
<svg style="left:775px;top:429px" width="16" height="16" viewBox="0 0 16 16"><path d="M3.4 14.6V8Q4 2.4 10 1.8H15.4V14.6Z" fill="url(#gW)" stroke="#4a4f58" stroke-width=".6"/><path d="M0.8 6.4Q2 1.4 7 0.8" fill="none" stroke="#7d9fe0" stroke-width="1.8"/></svg>
<svg style="left:775px;top:451px" width="16" height="16" viewBox="0 0 16 16"><path d="M1 14.6L2.2 9.6" stroke="#e8e8e8" stroke-width="1.3"/><path d="M14 5.4L15.2 0.8" stroke="#e8e8e8" stroke-width="1.3"/><path d="M2.2 7.4Q4 3.6 7.4 7.6Q10.6 11.6 13.8 6.8" fill="none" stroke="#3f8be8" stroke-width="1.4"/><circle cx="2.4" cy="8.4" r="1.7" fill="#16233f" stroke="#5b8be0" stroke-width=".8"/><circle cx="13.8" cy="6.8" r="1.7" fill="#16233f" stroke="#5b8be0" stroke-width=".8"/></svg>
<svg style="left:775px;top:473px" width="16" height="16" viewBox="0 0 16 16"><path d="M5 3.4L11 1.6L13.4 3L7.6 5Z" fill="#f0f4fa" stroke="#8a96aa" stroke-width=".4"/><path d="M0.8 7.4L3.6 5.6V12L0.8 13.8Z" fill="#c7dbf6" stroke="#8a96aa" stroke-width=".4"/><path d="M13 5.6L15.6 4.2V10.4L13 11.8Z" fill="#e9eef7" stroke="#8a96aa" stroke-width=".4"/><rect x="4.2" y="7.2" width="6.8" height="7.2" fill="url(#gB)" stroke="#6a8fd0" stroke-width=".6"/><path d="M4.2 7.2L6.4 5.6H13L11 7.2Z" fill="#dbe7fa"/><path d="M11 7.2L13 5.6V12.6L11 14.4Z" fill="#7ea3dc"/></svg>
<svg style="left:775px;top:505px" width="16" height="16" viewBox="0 0 16 16"><rect x="1" y="2" width="11" height="8" fill="#f4f4f4" stroke="#333" stroke-width=".7"/><rect x="4" y="5" width="11" height="8" fill="#8fb2e4" stroke="#333" stroke-width=".7"/></svg>
<div class="a" style="left:30px;top:87px;width:737px;height:423px;background:#212830"></div>
<svg style="left:0;top:0" width="800" height="600" viewBox="0 0 800 600" fill="none"><path d="M255.5 404.5V289.5A149.35 145.5 0 0 1 554.2 289.5V404.5" stroke="#f0f0f0" stroke-width="1.3"/><path d="M38.4 451V501.5H89" stroke="#e6e6e6" stroke-width="1.3"/><path d="M40.2 434.2L46.6 440.6L53 434.2M46.6 440.6V446.8" stroke="#e6e6e6" stroke-width="1.3"/><path d="M93.2 487.3L105.8 499.5M105.8 487.3L93.2 499.5" stroke="#e6e6e6" stroke-width="1.3"/><rect x="706" y="102.6" width="10" height="3" fill="#ececec"/><path d="M728.5 99.5V97.5H735.5V104.5H733.5" stroke="#ececec" stroke-width="1.6"/><rect x="726.9" y="100.2" width="6" height="5.6" stroke="#ececec" stroke-width="1.9"/><path d="M746.8 98.6L754.2 105.6M754.2 98.6L746.8 105.6" stroke="#ececec" stroke-width="2.6"/></svg>
<div class="a" style="left:0;top:510px;width:800px;height:3px;background:#6c6c6c"></div>
<div class="a" style="left:1px;top:513px;width:797px;height:56px;background:#fff"></div>
<div class="a" style="left:24px;top:513px;width:774px;height:33px;background:#c9c9c9"></div>
<div class="a" style="left:1px;top:513px;width:23px;height:56px;background:linear-gradient(#747474,#3e3e3e 55%,#2e2e2e)"></div>
<div class="a" style="left:798px;top:513px;width:2px;height:56px;background:#4a4a4a"></div>
<svg class="a" style="left:26px;top:513.7px" width="121" height="17" viewBox="0 -12.6 121 17"><text x="0" y="0" xml:space="preserve" font-family="'Liberation Mono','Noto Sans CJK SC',monospace" font-size="12.6" fill="#0c0c0c" stroke="#0c0c0c" stroke-width=".25">选择要合并的对象:</text></svg>
<svg class="a" style="left:26px;top:528.6px" width="180" height="17" viewBox="0 -12.6 180 17"><text x="0" y="0" xml:space="preserve" font-family="'Liberation Mono','Noto Sans CJK SC',monospace" font-size="12.6" fill="#0c0c0c" stroke="#0c0c0c" stroke-width=".25">3 个对象已转换为 1 条多段线</text></svg>
<svg class="a" style="left:61.5px;top:549.7px" width="55" height="17" viewBox="0 -12.6 55 17"><text x="0.5" y="0" font-family="'Liberation Sans','Noto Sans CJK SC',sans-serif" font-size="12.6" font-style="italic" fill="#adadad">键入命令</text></svg>
<svg style="left:4px;top:517px" width="18" height="6" viewBox="0 0 18 6"><rect x="0" y="0" width="1.9" height="1.9" fill="#929292"/><rect x="2.9" y="0" width="1.9" height="1.9" fill="#929292"/><rect x="5.8" y="0" width="1.9" height="1.9" fill="#929292"/><rect x="8.7" y="0" width="1.9" height="1.9" fill="#929292"/><rect x="11.6" y="0" width="1.9" height="1.9" fill="#929292"/><rect x="14.5" y="0" width="1.9" height="1.9" fill="#929292"/><rect x="0" y="3.1" width="1.9" height="1.9" fill="#929292"/><rect x="2.9" y="3.1" width="1.9" height="1.9" fill="#929292"/><rect x="5.8" y="3.1" width="1.9" height="1.9" fill="#929292"/><rect x="8.7" y="3.1" width="1.9" height="1.9" fill="#929292"/><rect x="11.6" y="3.1" width="1.9" height="1.9" fill="#929292"/><rect x="14.5" y="3.1" width="1.9" height="1.9" fill="#929292"/></svg>
<svg style="left:7px;top:529px" width="11" height="11" viewBox="0 0 11 11"><path d="M1.2 1.4L9.8 9.6M9.8 1.4L1.2 9.6" stroke="#f4f4f4" stroke-width="2"/></svg>
<svg style="left:4px;top:548px" width="17" height="17" viewBox="0 0 17 17"><path d="M6.4 7.6L13.8 15" stroke="#1a1a1a" stroke-width="4.4" stroke-linecap="round"/><path d="M6.4 7.6L13.8 15" stroke="#f4f4f4" stroke-width="2.8" stroke-linecap="round"/><path d="M7.4 1.4A4.2 4.2 0 1 0 9.4 7.2A4.2 4.2 0 0 0 9.6 3.6L6.8 6.2L4.6 5.6L4.2 3.6Z" fill="#f4f4f4" stroke="#1a1a1a" stroke-width=".7"/></svg>
<svg style="left:29px;top:551px" width="15" height="14" viewBox="0 0 15 14"><rect x="0.5" y="0.5" width="14" height="13" rx="1" fill="#ebebeb" stroke="#a2a2a2" stroke-width="1"/><path d="M3 3.4L7 6.8L3 10.2" fill="none" stroke="#3a3a3a" stroke-width="1.4"/><path d="M7.6 10.6H12" stroke="#303030" stroke-width="1.3"/></svg>
<svg style="left:47px;top:556px" width="7" height="5" viewBox="0 0 7 5"><path d="M0.4 0.6H6.4L3.4 4Z" fill="#7a7a7a"/></svg>
<div class="a" style="left:0;top:569px;width:800px;height:31px;background:#383838"></div>
<div class="a" style="left:301px;top:570px;width:499px;height:28px;background:#4a4a4a"></div>
<div class="sb" style="left:301px;width:27px"></div>
<div class="sb" style="left:327px;width:104px"></div>
<div class="sb" style="left:430px;width:65px"></div>
<div class="sb" style="left:494px;width:27px"></div>
<div class="sb" style="left:520px;width:27px"></div>
<div class="sb" style="left:548px;width:107px"></div>
<div class="sb" style="left:654px;width:44px"></div>
<div class="sb" style="left:697px;width:26px"></div>
<div class="sb" style="left:722px;width:28px"></div>
<div class="sb" style="left:749px;width:28px"></div>
<div class="sb" style="left:776px;width:30px"></div>
<div class="a" style="left:0;top:598px;width:800px;height:2px;background:#2f4755"></div>
<div class="a" style="left:604px;top:598.6px;width:196px;height:2px;background:#d4d4d6"></div>
<div class="a" style="left:646px;top:598.6px;width:34px;height:2px;background:#5a4034"></div>
<svg style="left:307px;top:577px" width="16" height="16" viewBox="0 0 16 16"><path d="M0.4 4.4H8M4.2 0.6V8.2" stroke="#f2f2f2" stroke-width="1.2"/><rect x="6.6" y="9.2" width="9.4" height="3.4" rx="1" fill="#e4e4e4"/></svg>
<svg style="left:332px;top:577px" width="16" height="16" viewBox="0 0 16 16"><path d="M2.4 0.8V12.8H15" fill="none" stroke="#2f86ff" stroke-width="1.5"/><path d="M2.4 9.6H5.8V12.8" fill="none" stroke="#2f86ff" stroke-width="1"/></svg>
<svg style="left:356px;top:577px" width="16" height="16" viewBox="0 0 16 16"><circle cx="7.6" cy="8.4" r="6.4" fill="none" stroke="#dadada" stroke-width="1.2"/><path d="M7.6 8.4H15.6M7.6 8.4L14 1.6M11.8 0.8L14.4 1.2" fill="none" stroke="#dadada" stroke-width="1.1"/></svg>
<svg style="left:378px;top:577px" width="9" height="16" viewBox="0 0 9 16"><path d="M0.8 5.6H8L4.4 9.6Z" fill="#f4f4f4"/></svg>
<svg style="left:396px;top:577px" width="16" height="16" viewBox="0 0 16 16"><path d="M8 0V16M0.6 1L15 15.4" stroke="#9a9a9a" stroke-width="1.2"/><circle cx="8" cy="8.4" r="1" fill="#ddd"/></svg>
<svg style="left:417px;top:577px" width="9" height="16" viewBox="0 0 9 16"><path d="M0.8 5.6H8L4.4 9.6Z" fill="#f4f4f4"/></svg>
<svg style="left:435px;top:577px" width="16" height="16" viewBox="0 0 16 16"><path d="M15.6 2.6L1 14.6H16" fill="none" stroke="#2f86ff" stroke-width="1.4"/><rect x="6.8" y="6.6" width="2.6" height="2.6" fill="#2f86ff"/></svg>
<svg style="left:459px;top:577px" width="16" height="16" viewBox="0 0 16 16"><rect x="2.6" y="2.6" width="12.4" height="12.4" fill="none" stroke="#2f86ff" stroke-width="1.5"/><rect x="0.6" y="0.6" width="4.2" height="4.2" fill="#101010"/><rect x="1.4" y="1.4" width="2.6" height="2.6" fill="#23d13a"/></svg>
<svg style="left:481px;top:577px" width="9" height="16" viewBox="0 0 9 16"><path d="M0.8 5.6H8L4.4 9.6Z" fill="#f4f4f4"/></svg>
<svg style="left:499px;top:577px" width="16" height="16" viewBox="0 0 16 16"><path d="M0 2.2H15.6" stroke="#d8d8d8" stroke-width="2.2"/><path d="M0 6.4H12" stroke="#d8d8d8" stroke-width="1.8"/><path d="M0 10H15.6" stroke="#d8d8d8" stroke-width="1.2"/><path d="M0 13.6H7.4" stroke="#d8d8d8" stroke-width="2.4"/></svg>
<svg style="left:525px;top:577px" width="16" height="16" viewBox="0 0 16 16"><path d="M2.4 1V13.6H15.4" fill="none" stroke="#e0e0e0" stroke-width="1.1"/><path d="M0.8 3L2.4 0.6L4 3M13.4 12L15.8 13.6L13.4 15.2" fill="none" stroke="#e0e0e0" stroke-width=".9"/><path d="M3 13L8.6 7.4" stroke="#c8c8c8" stroke-width="1"/><path d="M12 0.8L8 6H10.6L8.4 10.2L14 4.6H11.2L13.6 0.8Z" fill="#e8e8e8"/></svg>
<svg style="left:553px;top:577px" width="18" height="17" viewBox="0 0 18 17"><path d="M7.4 0.6L9.6 6.2L16.8 15.8L12.2 14.8L8.8 11L5.6 14.8L0.6 15.8L6.4 6.8L5.6 1.6Z" fill="#2f86ff"/><circle cx="12" cy="4" r="2.8" fill="#4a4a4a" stroke="#2f86ff" stroke-width="1.4"/></svg>
<svg style="left:577px;top:577px" width="18" height="17" viewBox="0 0 18 17"><path d="M7.4 0.6L9.6 6.2L16.8 15.8L12.2 14.8L8.8 11L5.6 14.8L0.6 15.8L6.4 6.8L5.6 1.6Z" fill="#b8b8b8"/><path d="M13.6 0.4L10 5.2H12.2L10.6 9L15.6 3.8H13.2L15 0.4Z" fill="#d4d4d4" stroke="#4a4a4a" stroke-width=".5"/></svg>
<svg style="left:600.5px;top:577px" width="18" height="17" viewBox="0 0 18 17"><path d="M7.4 0.6L9.6 6.2L16.8 15.8L12.2 14.8L8.8 11L5.6 14.8L0.6 15.8L6.4 6.8L5.6 1.6Z" fill="#b8b8b8"/></svg>
<svg style="left:624.5px;top:577px" width="16" height="16" viewBox="0 0 16 16"><text x="8.4" y="11.2" text-anchor="middle" font-family="Liberation Sans, sans-serif" font-weight="bold" font-size="8.6" fill="#cfcfcf">1:1</text></svg>
<svg style="left:642px;top:577px" width="9" height="16" viewBox="0 0 9 16"><path d="M0.8 5.6H8L4.4 9.6Z" fill="#f4f4f4"/></svg>
<svg style="left:661px;top:577px" width="16" height="16" viewBox="0 0 16 16"><circle cx="8" cy="8" r="4.2" fill="none" stroke="#bdbdbd" stroke-width="2.6"/><circle cx="8" cy="8" r="6.4" fill="none" stroke="#bdbdbd" stroke-width="2" stroke-dasharray="2.4 2.6"/></svg>
<svg style="left:683px;top:577px" width="9" height="16" viewBox="0 0 9 16"><path d="M0.8 5.6H8L4.4 9.6Z" fill="#f4f4f4"/></svg>
<svg style="left:702px;top:577px" width="16" height="16" viewBox="0 0 16 16"><path d="M8 1V15M1 8H15" stroke="#cfcfcf" stroke-width="1.8"/></svg>
<svg style="left:728px;top:577px" width="16" height="16" viewBox="0 0 16 16"><rect x="3" y="1.4" width="9.6" height="13" fill="none" stroke="#cfcfcf" stroke-width="1.2"/><path d="M5 4.4H10.6M5 7.4H10.6M5 10.2H10.6M5 12.6H10.6" stroke="#cfcfcf" stroke-width="1.1" stroke-dasharray="1.4 .8"/></svg>
<svg style="left:755px;top:577px" width="16" height="16" viewBox="0 0 16 16"><rect x="3.4" y="0.8" width="7" height="6.4" fill="none" stroke="#cfcfcf" stroke-width="1.1"/><circle cx="12.2" cy="6.6" r="3" fill="#4a4a4a" stroke="#cfcfcf" stroke-width="1.1"/><path d="M6 9L9.6 15H2.4Z" fill="none" stroke="#cfcfcf" stroke-width="1.2"/></svg>
<svg style="left:778.5px;top:573.5px" width="22" height="22" viewBox="0 0 22 22"><circle cx="11" cy="11" r="9.8" fill="#1b5fc8" stroke="#3f8bff" stroke-width="1.3"/><path d="M7 14L15.4 7" stroke="#a8caff" stroke-width="1.5"/><path d="M6 12.6L8.2 15.2" stroke="#a8caff" stroke-width="1.3"/></svg>
<svg style="left:600px;top:556px" width="200" height="40" viewBox="600 556 200 40"><defs><filter id="sh" x="-10%%" y="-30%%" width="120%%" height="170%%"><feGaussianBlur stdDeviation="0.9"/></filter></defs><g transform="translate(1.3 1.5)" fill="#000" filter="url(#sh)" opacity="0.95"><text x="607" y="581" font-family="'Liberation Sans','Noto Sans CJK SC',sans-serif" font-size="19.6" font-weight="bold" stroke="#000" stroke-width=".45">头条</text><text x="652.5" y="581" font-family="Liberation Sans, sans-serif" font-size="20.5">@</text><text x="673" y="581" font-family="'Liberation Sans','Noto Sans CJK SC',sans-serif" font-size="19.8">小黄花</text><text x="732.6" y="581.2" font-family="Liberation Sans, sans-serif" font-size="21.3" textLength="49.5" lengthAdjust="spacingAndGlyphs">CAD</text></g><g transform="translate(1 1.2)" fill="#000" opacity="0.7"><text x="607" y="581" font-family="'Liberation Sans','Noto Sans CJK SC',sans-serif" font-size="19.6" font-weight="bold" stroke="#000" stroke-width=".45">头条</text><text x="652.5" y="581" font-family="Liberation Sans, sans-serif" font-size="20.5">@</text><text x="673" y="581" font-family="'Liberation Sans','Noto Sans CJK SC',sans-serif" font-size="19.8">小黄花</text><text x="732.6" y="581.2" font-family="Liberation Sans, sans-serif" font-size="21.3" textLength="49.5" lengthAdjust="spacingAndGlyphs">CAD</text></g><g transform="translate(0 0)" fill="#fff" ><text x="607" y="581" font-family="'Liberation Sans','Noto Sans CJK SC',sans-serif" font-size="19.6" font-weight="bold" stroke="#fff" stroke-width=".45">头条</text><text x="652.5" y="581" font-family="Liberation Sans, sans-serif" font-size="20.5">@</text><text x="673" y="581" font-family="'Liberation Sans','Noto Sans CJK SC',sans-serif" font-size="19.8">小黄花</text><text x="732.6" y="581.2" font-family="Liberation Sans, sans-serif" font-size="21.3" textLength="49.5" lengthAdjust="spacingAndGlyphs">CAD</text></g></svg>
<div class="a" style="left:799px;top:0;width:1px;height:600px;background:#2d4a5c"></div>
<div class="a" style="left:798.6px;top:386px;width:1.4px;height:126px;background:#94a1ae"></div>
</body></html>
